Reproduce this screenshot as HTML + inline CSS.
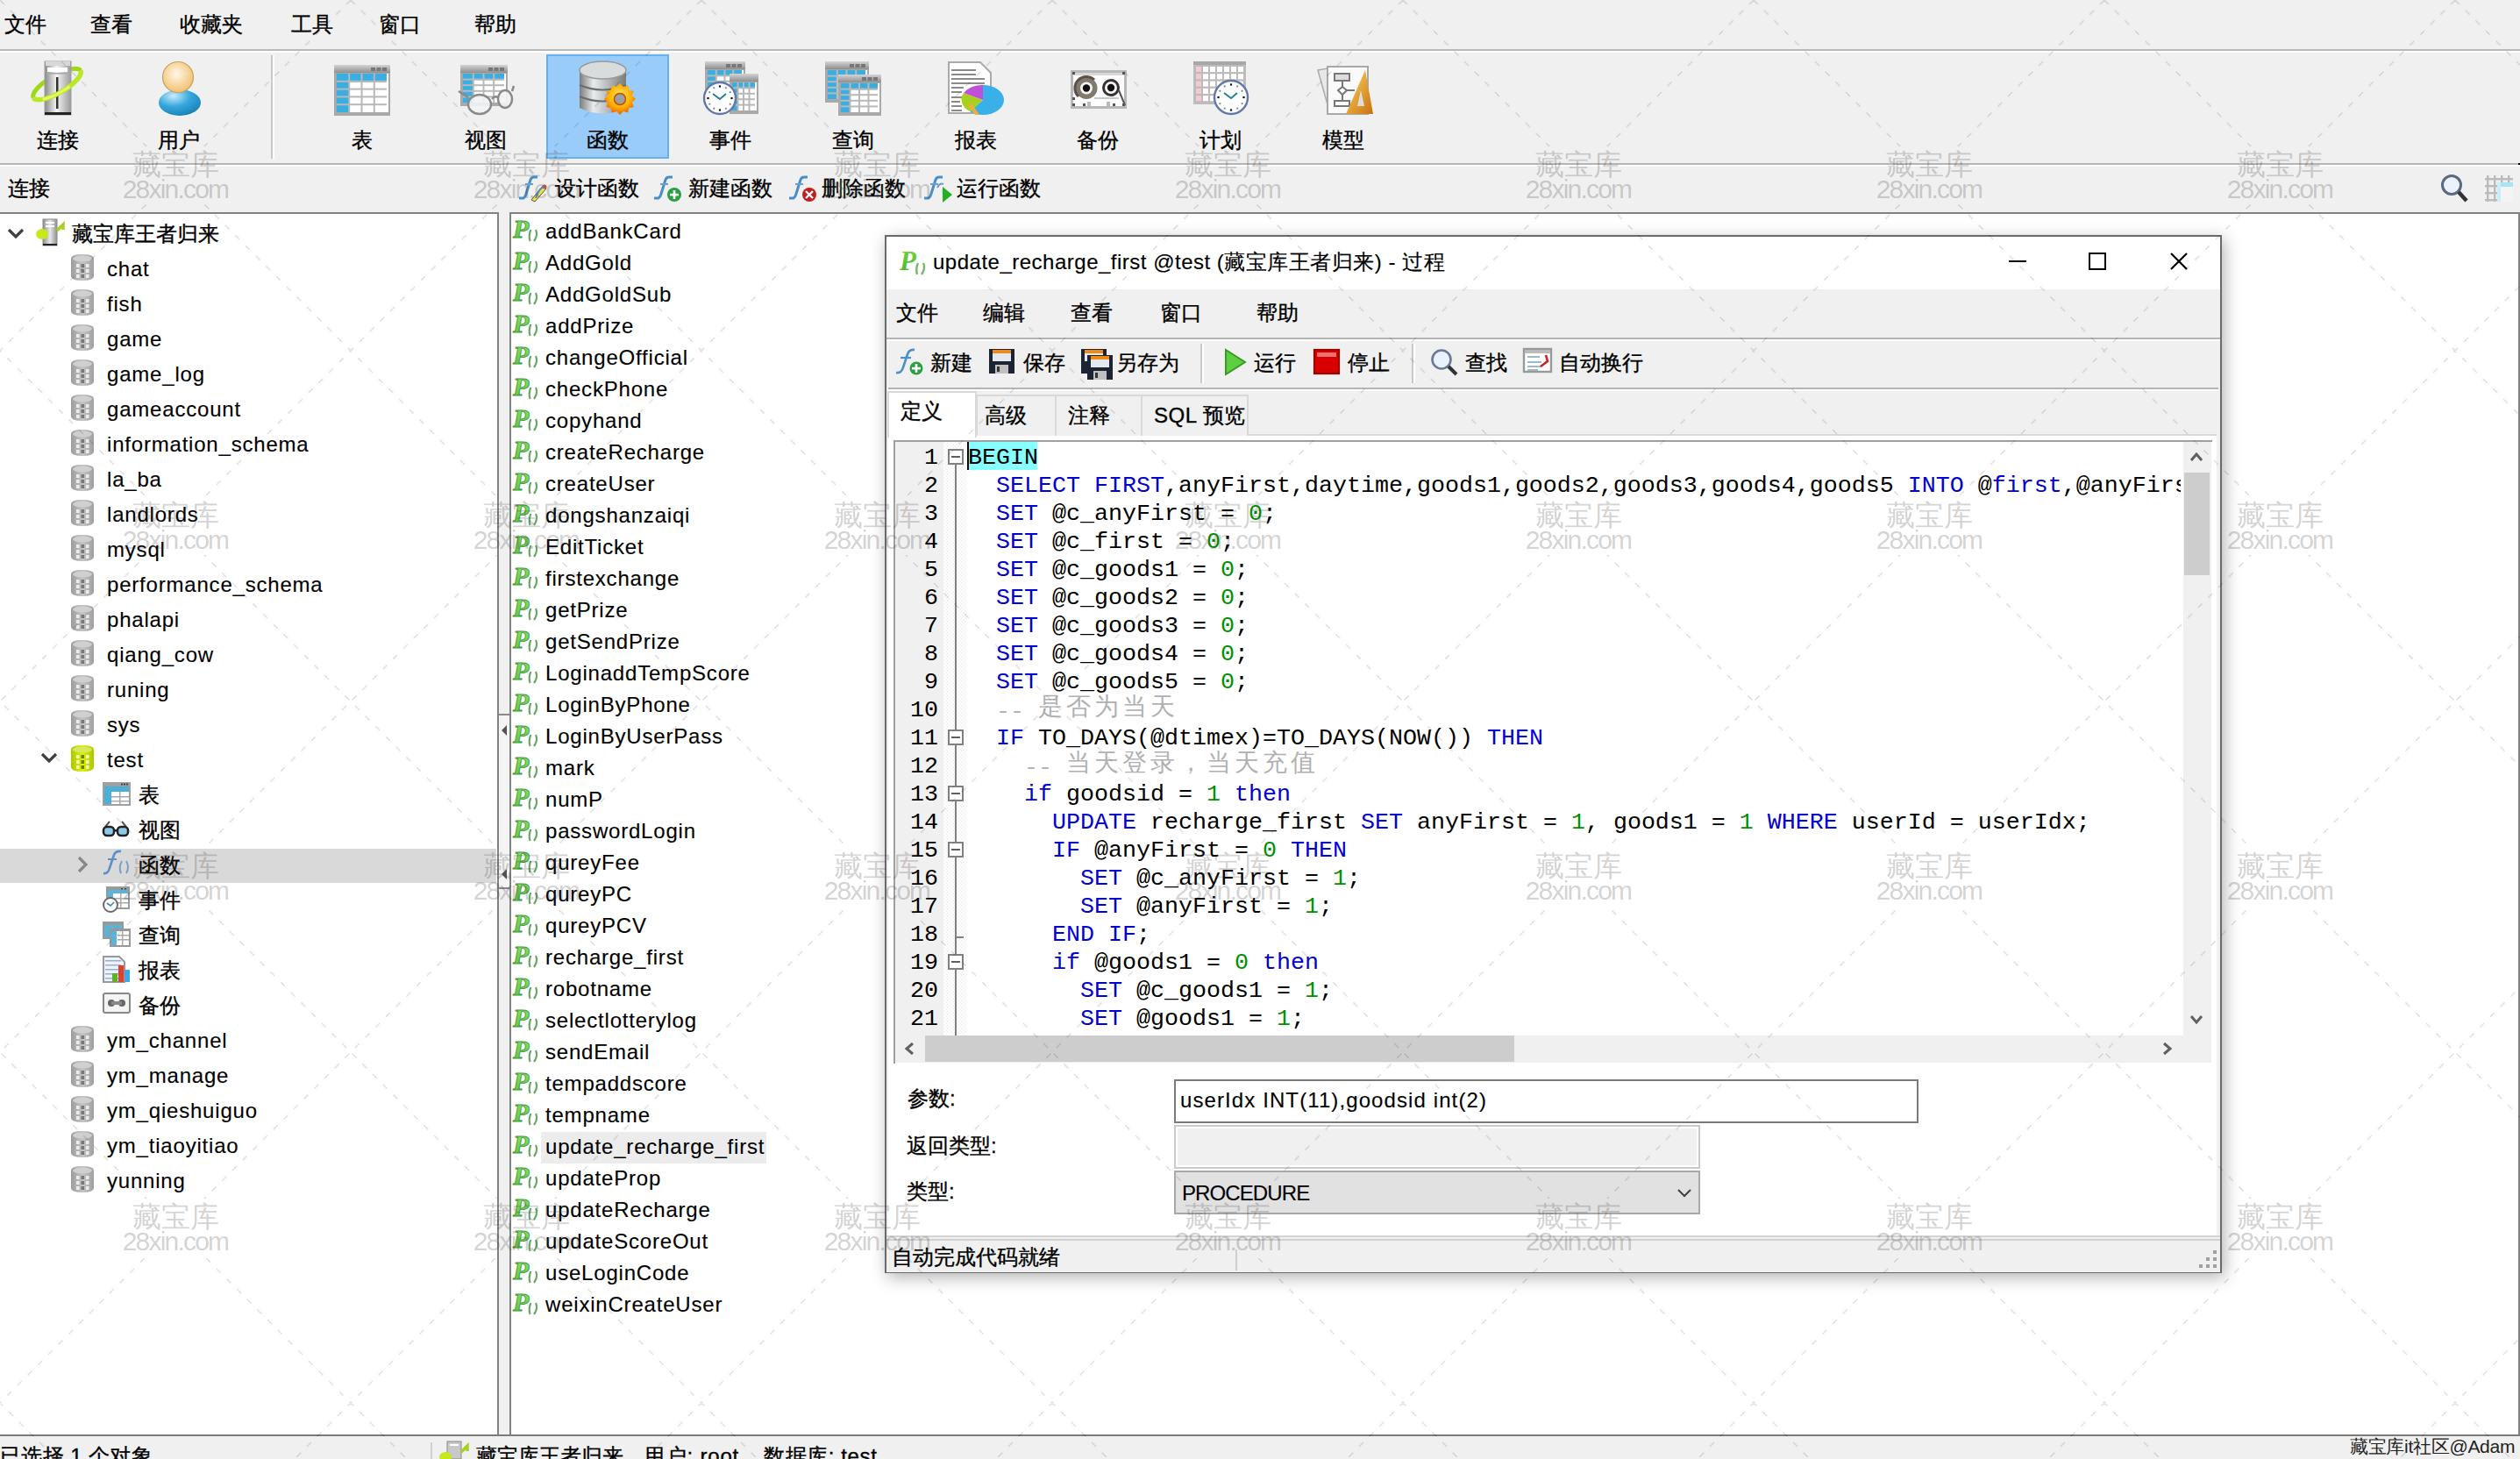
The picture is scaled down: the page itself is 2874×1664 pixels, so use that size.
<!DOCTYPE html>
<html><head><meta charset="utf-8">
<style>
*{margin:0;padding:0;box-sizing:border-box}
html,body{width:2874px;height:1664px;overflow:hidden;background:#f0f0f0;font-family:"Liberation Sans",sans-serif;font-size:24px;color:#000;font-weight:500}
.a{position:absolute}
.t{position:absolute;white-space:nowrap;line-height:24px;font-size:24px;-webkit-text-stroke:0.35px currentColor}
.hl{position:absolute;height:2px}
.vl{position:absolute;width:2px}
.code{position:absolute;font-family:"Liberation Mono",monospace;font-size:26.67px;line-height:32px;white-space:pre;color:#000}
.k{color:#0000d0}.n{color:#009000}.c{color:#b0b0b0}
svg{position:absolute;overflow:visible}
.ls{letter-spacing:0.6px}
</style></head><body>

<div class="t" style="left:5px;top:16px;">文件</div>
<div class="t" style="left:103px;top:16px;">查看</div>
<div class="t" style="left:205px;top:16px;">收藏夹</div>
<div class="t" style="left:332px;top:16px;">工具</div>
<div class="t" style="left:432px;top:16px;">窗口</div>
<div class="t" style="left:541px;top:16px;">帮助</div>
<div class="a" style="left:0px;top:56px;width:2874px;height:2px;background:#b9b9b9"></div>
<div class="a" style="left:0px;top:58px;width:2874px;height:2px;background:#fff"></div>
<div class="a" style="left:623px;top:62px;width:140px;height:119px;background:#99ccf8;border:2px solid #66b0ee"></div>
<div class="a" style="left:309px;top:63px;width:2px;height:118px;background:#c8c8c8"></div>
<div class="a" style="left:311px;top:63px;width:2px;height:118px;background:#fff"></div>
<div class="t" style="left:42px;top:148px;">连接</div>
<div class="t" style="left:180px;top:148px;">用户</div>
<div class="t" style="left:401px;top:148px;">表</div>
<div class="t" style="left:530px;top:148px;">视图</div>
<div class="t" style="left:669px;top:148px;">函数</div>
<div class="t" style="left:809px;top:148px;">事件</div>
<div class="t" style="left:949px;top:148px;">查询</div>
<div class="t" style="left:1089px;top:148px;">报表</div>
<div class="t" style="left:1228px;top:148px;">备份</div>
<div class="t" style="left:1368px;top:148px;">计划</div>
<div class="t" style="left:1508px;top:148px;">模型</div>
<svg style="left:0;top:0" width="1600" height="240">
<defs>
<linearGradient id="gTitle" x1="0" y1="0" x2="0" y2="1"><stop offset="0" stop-color="#d4d4d4"/><stop offset="1" stop-color="#8e8e8e"/></linearGradient>
<linearGradient id="gSrv" x1="0" y1="0" x2="1" y2="0"><stop offset="0" stop-color="#8a8a8a"/><stop offset="0.45" stop-color="#f4f4f4"/><stop offset="1" stop-color="#9a9a9a"/></linearGradient>
<radialGradient id="gHead" cx="0.45" cy="0.4" r="0.6"><stop offset="0" stop-color="#fff8e8"/><stop offset="1" stop-color="#f2c070"/></radialGradient>
<radialGradient id="gBody" cx="0.35" cy="0.25" r="0.8"><stop offset="0" stop-color="#c8ecfa"/><stop offset="0.5" stop-color="#36a8dc"/><stop offset="1" stop-color="#1680b8"/></radialGradient>
<linearGradient id="gMetal" x1="0" y1="0" x2="1" y2="0"><stop offset="0" stop-color="#7c7c7c"/><stop offset="0.3" stop-color="#e8ecec"/><stop offset="0.6" stop-color="#b8bcbc"/><stop offset="1" stop-color="#7a7a7a"/></linearGradient>
<radialGradient id="gGear" cx="0.5" cy="0.4" r="0.6"><stop offset="0" stop-color="#ffe860"/><stop offset="0.6" stop-color="#ffb000"/><stop offset="1" stop-color="#e86000"/></radialGradient>
<linearGradient id="gRuler" x1="0" y1="0" x2="1" y2="1"><stop offset="0" stop-color="#ffd860"/><stop offset="1" stop-color="#c87010"/></linearGradient>
</defs>
<path d="M38.2 111.5 L37.7 110.2 L37.8 108.7 L38.3 107.0 L39.2 105.1 L40.7 103.0 L42.5 100.8 L44.7 98.6 L47.2 96.2 L50.1 93.9 L53.2 91.6 L56.5 89.4 L60.0 87.3 L63.5 85.4 L67.1 83.6 L70.7 82.1 L74.1 80.8 L77.4 79.7 L80.4 78.9 L83.3 78.4 L85.8 78.2 L87.9 78.4 L89.6 78.8 L91.0 79.5 L91.8 80.5" fill="none" stroke="#a0d818" stroke-width="5"/>
<rect x="51" y="70" width="30" height="61" fill="url(#gSrv)" stroke="#a0a0a0" stroke-width="1"/>
<rect x="52" y="70" width="28" height="5" fill="#d8d8d8"/>
<rect x="54" y="77" width="23" height="5" fill="#fff"/><rect x="53" y="83" width="26" height="1.5" fill="#a8a8a8"/>
<rect x="64" y="88" width="2.5" height="36" fill="#333"/>
<rect x="51" y="128" width="30" height="3" fill="#222"/>
<path d="M91.8 80.5 L92.3 81.8 L92.2 83.3 L91.7 85.0 L90.8 86.9 L89.3 89.0 L87.5 91.2 L85.3 93.4 L82.8 95.8 L79.9 98.1 L76.8 100.4 L73.5 102.6 L70.0 104.7 L66.5 106.6 L62.9 108.4 L59.3 109.9 L55.9 111.2 L52.6 112.3 L49.6 113.1 L46.7 113.6 L44.2 113.8 L42.1 113.6 L40.4 113.2 L39.0 112.5 L38.2 111.5" fill="none" stroke="#b8e828" stroke-width="5.5"/>
<path d="M79.4 98.5 L75.8 101.1 L71.9 103.5 L67.9 105.9 L63.8 108.0 L59.7 109.8 L55.8 111.3 L52.0 112.5 L48.6 113.3" fill="none" stroke="#e8f860" stroke-width="3"/>
<ellipse cx="205" cy="117" rx="24" ry="15" fill="url(#gBody)"/>
<circle cx="203" cy="88" r="17.5" fill="url(#gHead)" stroke="#c8a060" stroke-width="1.2"/>
<rect x="381" y="74" width="64" height="58" fill="#a9a9a9"/><rect x="381" y="74" width="64" height="9" fill="url(#gTitle)"/><rect x="423.0" y="77" width="5" height="4" fill="#777"/><rect x="429.5" y="77" width="5" height="4" fill="#777"/><rect x="436.0" y="77" width="5" height="4" fill="#777"/><rect x="384" y="84" width="57" height="44" fill="#fff"/><rect x="384" y="84" width="57" height="9.7" fill="#3aaee0"/><rect x="384" y="84" width="14.2" height="44" fill="#3aaee0"/><rect x="384" y="91.8" width="57" height="2" fill="#b8b8b8"/><rect x="384" y="100.6" width="57" height="2" fill="#b8b8b8"/><rect x="384" y="109.4" width="57" height="2" fill="#b8b8b8"/><rect x="384" y="118.2" width="57" height="2" fill="#b8b8b8"/><rect x="397.2" y="84" width="2" height="44" fill="#b8b8b8"/><rect x="411.5" y="84" width="2" height="44" fill="#b8b8b8"/><rect x="425.8" y="84" width="2" height="44" fill="#b8b8b8"/><rect x="441" y="84" width="2" height="44" fill="#fff"/>
<rect x="525" y="74" width="54" height="47" fill="#a9a9a9"/><rect x="525" y="74" width="54" height="9" fill="url(#gTitle)"/><rect x="557.0" y="77" width="5" height="4" fill="#777"/><rect x="563.5" y="77" width="5" height="4" fill="#777"/><rect x="570.0" y="77" width="5" height="4" fill="#777"/><rect x="528" y="84" width="47" height="33" fill="#fff"/><rect x="528" y="84" width="47" height="7.3" fill="#3aaee0"/><rect x="528" y="84" width="11.8" height="33" fill="#3aaee0"/><rect x="528" y="89.6" width="47" height="2" fill="#b8b8b8"/><rect x="528" y="96.2" width="47" height="2" fill="#b8b8b8"/><rect x="528" y="102.8" width="47" height="2" fill="#b8b8b8"/><rect x="528" y="109.4" width="47" height="2" fill="#b8b8b8"/><rect x="538.8" y="84" width="2" height="33" fill="#b8b8b8"/><rect x="550.5" y="84" width="2" height="33" fill="#b8b8b8"/><rect x="562.2" y="84" width="2" height="33" fill="#b8b8b8"/><rect x="575" y="84" width="2" height="33" fill="#fff"/>
<path d="M523 104 L534 111" stroke="#8a8a8a" stroke-width="2.5"/><path d="M561 113 Q564 109 568 111" fill="none" stroke="#8a8a8a" stroke-width="2.5"/><ellipse cx="547" cy="119" rx="13" ry="11" fill="rgba(240,244,244,0.9)" stroke="#8a8a8a" stroke-width="2.5"/><ellipse cx="576" cy="113" rx="8" ry="10" fill="rgba(240,244,244,0.9)" stroke="#8a8a8a" stroke-width="2.5"/><path d="M584 104 L586 98" stroke="#8a8a8a" stroke-width="2.5"/>
<path d="M661 80 L661 123 Q687 136 714 123 L714 80 Z" fill="url(#gMetal)"/>
<ellipse cx="687.5" cy="80" rx="26.5" ry="10" fill="#d8dcdc" stroke="#9a9a9a" stroke-width="1.5"/>
<path d="M661 97 Q687 108 714 97" fill="none" stroke="#6c6c6c" stroke-width="2"/>
<path d="M661 110 Q687 121 714 110" fill="none" stroke="#6c6c6c" stroke-width="2"/>
<polygon points="725.0,113.0 721.0,116.8 722.6,122.0 717.3,123.3 716.0,128.6 710.8,127.0 707.0,131.0 703.2,127.0 698.0,128.6 696.7,123.3 691.4,122.0 693.0,116.8 689.0,113.0 693.0,109.2 691.4,104.0 696.7,102.7 698.0,97.4 703.2,99.0 707.0,95.0 710.8,99.0 716.0,97.4 717.3,102.7 722.6,104.0 721.0,109.2" fill="url(#gGear)"/>
<circle cx="707" cy="113" r="6.5" fill="#9aa0a4" stroke="#c05000" stroke-width="1.5"/>
<rect x="804" y="70" width="46" height="46" fill="#a9a9a9"/><rect x="804" y="70" width="46" height="9" fill="url(#gTitle)"/><rect x="828.0" y="73" width="5" height="4" fill="#777"/><rect x="834.5" y="73" width="5" height="4" fill="#777"/><rect x="841.0" y="73" width="5" height="4" fill="#777"/><rect x="807" y="80" width="39" height="32" fill="#fff"/><rect x="807" y="80" width="39" height="7.0" fill="#3aaee0"/><rect x="807" y="80" width="9.8" height="32" fill="#3aaee0"/><rect x="807" y="85.4" width="39" height="2" fill="#b8b8b8"/><rect x="807" y="91.8" width="39" height="2" fill="#b8b8b8"/><rect x="807" y="98.2" width="39" height="2" fill="#b8b8b8"/><rect x="807" y="104.6" width="39" height="2" fill="#b8b8b8"/><rect x="815.8" y="80" width="2" height="32" fill="#b8b8b8"/><rect x="825.5" y="80" width="2" height="32" fill="#b8b8b8"/><rect x="835.2" y="80" width="2" height="32" fill="#b8b8b8"/><rect x="846" y="80" width="2" height="32" fill="#fff"/>
<rect x="832" y="84" width="33" height="46" fill="#a9a9a9"/><rect x="832" y="84" width="33" height="9" fill="url(#gTitle)"/><rect x="835" y="94" width="26" height="32" fill="#fff"/><rect x="835" y="94" width="26" height="7.0" fill="#3aaee0"/><rect x="835" y="94" width="6.5" height="32" fill="#3aaee0"/><rect x="835" y="99.4" width="26" height="2" fill="#b8b8b8"/><rect x="835" y="105.8" width="26" height="2" fill="#b8b8b8"/><rect x="835" y="112.2" width="26" height="2" fill="#b8b8b8"/><rect x="835" y="118.6" width="26" height="2" fill="#b8b8b8"/><rect x="840.5" y="94" width="2" height="32" fill="#b8b8b8"/><rect x="847.0" y="94" width="2" height="32" fill="#b8b8b8"/><rect x="853.5" y="94" width="2" height="32" fill="#b8b8b8"/><rect x="861" y="94" width="2" height="32" fill="#fff"/>
<circle cx="821" cy="112" r="18" fill="#fcfdff" stroke="#6478a8" stroke-width="2.4"/><rect x="833.4" y="110.9" width="2.2" height="2.2" fill="#111"/><rect x="831.8" y="117.8" width="1.8" height="1.8" fill="#777"/><rect x="826.9" y="122.8" width="1.8" height="1.8" fill="#777"/><rect x="819.9" y="124.4" width="2.2" height="2.2" fill="#111"/><rect x="813.4" y="122.8" width="1.8" height="1.8" fill="#777"/><rect x="808.4" y="117.8" width="1.8" height="1.8" fill="#777"/><rect x="806.4" y="110.9" width="2.2" height="2.2" fill="#111"/><rect x="808.4" y="104.3" width="1.8" height="1.8" fill="#777"/><rect x="813.4" y="99.4" width="1.8" height="1.8" fill="#777"/><rect x="819.9" y="97.4" width="2.2" height="2.2" fill="#111"/><rect x="826.9" y="99.4" width="1.8" height="1.8" fill="#777"/><rect x="831.8" y="104.3" width="1.8" height="1.8" fill="#777"/><path d="M813 107 L821 113 L828 107" fill="none" stroke="#2a8090" stroke-width="2"/>
<rect x="941" y="70" width="50" height="47" fill="#a9a9a9"/><rect x="941" y="70" width="50" height="9" fill="url(#gTitle)"/><rect x="969.0" y="73" width="5" height="4" fill="#777"/><rect x="975.5" y="73" width="5" height="4" fill="#777"/><rect x="982.0" y="73" width="5" height="4" fill="#777"/><rect x="944" y="80" width="43" height="33" fill="#fff"/><rect x="944" y="80" width="43" height="7.3" fill="#3aaee0"/><rect x="944" y="80" width="10.8" height="33" fill="#3aaee0"/><rect x="944" y="85.6" width="43" height="2" fill="#b8b8b8"/><rect x="944" y="92.2" width="43" height="2" fill="#b8b8b8"/><rect x="944" y="98.8" width="43" height="2" fill="#b8b8b8"/><rect x="944" y="105.4" width="43" height="2" fill="#b8b8b8"/><rect x="953.8" y="80" width="2" height="33" fill="#b8b8b8"/><rect x="964.5" y="80" width="2" height="33" fill="#b8b8b8"/><rect x="975.2" y="80" width="2" height="33" fill="#b8b8b8"/><rect x="987" y="80" width="2" height="33" fill="#fff"/>
<rect x="956" y="85" width="49" height="47" fill="#a9a9a9"/><rect x="956" y="85" width="49" height="9" fill="url(#gTitle)"/><rect x="983.0" y="88" width="5" height="4" fill="#777"/><rect x="989.5" y="88" width="5" height="4" fill="#777"/><rect x="996.0" y="88" width="5" height="4" fill="#777"/><rect x="959" y="95" width="42" height="33" fill="#fff"/><rect x="959" y="95" width="42" height="7.3" fill="#3aaee0"/><rect x="959" y="95" width="10.5" height="33" fill="#3aaee0"/><rect x="959" y="100.6" width="42" height="2" fill="#b8b8b8"/><rect x="959" y="107.2" width="42" height="2" fill="#b8b8b8"/><rect x="959" y="113.8" width="42" height="2" fill="#b8b8b8"/><rect x="959" y="120.4" width="42" height="2" fill="#b8b8b8"/><rect x="968.5" y="95" width="2" height="33" fill="#b8b8b8"/><rect x="979.0" y="95" width="2" height="33" fill="#b8b8b8"/><rect x="989.5" y="95" width="2" height="33" fill="#b8b8b8"/><rect x="1001" y="95" width="2" height="33" fill="#fff"/>
<path d="M1082 71 L1118 71 L1130 83 L1130 129 L1082 129 Z" fill="#fff" stroke="#aaa" stroke-width="2"/>
<rect x="1085" y="79" width="28" height="2" fill="#8a8a8a"/>
<rect x="1085" y="84" width="28" height="2" fill="#8a8a8a"/>
<rect x="1085" y="89" width="38" height="2" fill="#8a8a8a"/>
<rect x="1085" y="94" width="38" height="2" fill="#8a8a8a"/>
<rect x="1085" y="99" width="14" height="2" fill="#8a8a8a"/>
<rect x="1085" y="104" width="12" height="2" fill="#8a8a8a"/>
<rect x="1085" y="110" width="12" height="2" fill="#8a8a8a"/>
<rect x="1085" y="115" width="10" height="2" fill="#8a8a8a"/>
<rect x="1085" y="120" width="12" height="2" fill="#8a8a8a"/>
<rect x="1085" y="125" width="12" height="2" fill="#8a8a8a"/>
<path d="M1121 114 L1121 97 A24 17 0 0 1 1121 131 A24 17 0 0 1 1106 127 Z" fill="#3ab0e8"/>
<path d="M1121 114 L1106 127 A24 17 0 0 1 1099 106 Z" fill="#a8d020"/>
<path d="M1121 114 L1099 106 A24 17 0 0 1 1121 97 Z" fill="#c050d8"/>
<path d="M1108 118 L1117 131 L1112 131 L1104 120 Z" fill="#f0b030"/>
<rect x="1222.5" y="81.5" width="61" height="41" fill="#fcfcfc" stroke="#b8b8b8" stroke-width="3"/>
<rect x="1224" y="83" width="58" height="3" fill="#d8d8d8"/>
<rect x="1223" y="82" width="3" height="3" fill="#555"/>
<rect x="1280" y="82" width="3" height="3" fill="#555"/>
<rect x="1223" y="111" width="3" height="3" fill="#555"/>
<rect x="1223" y="118" width="3" height="3" fill="#555"/>
<rect x="1280" y="118" width="3" height="3" fill="#555"/>
<rect x="1235" y="118" width="3" height="3" fill="#555"/>
<rect x="1269" y="118" width="3" height="3" fill="#555"/>
<circle cx="1239" cy="100.5" r="12.5" fill="#827a6c"/><path d="M1230 110 A12.5 12.5 0 0 1 1248 91" fill="none" stroke="#5a5248" stroke-width="3"/>
<circle cx="1239" cy="100.5" r="7" fill="#f4f4f4"/><circle cx="1239" cy="100.5" r="4.2" fill="#111"/>
<circle cx="1267" cy="100" r="8.5" fill="#f4f4f4" stroke="#3a3232" stroke-width="3"/><circle cx="1267" cy="100" r="4.2" fill="#111"/>
<path d="M1276 103 L1283 120" stroke="#555" stroke-width="2"/>
<path d="M1248 112 L1276 112" stroke="#c8c8d0" stroke-width="2"/><rect x="1240" y="116" width="4" height="5" fill="#bbb"/><rect x="1262" y="116" width="4" height="5" fill="#bbb"/>
<rect x="1361" y="70" width="60" height="49" fill="#bcbcbc"/>
<rect x="1361" y="70" width="60" height="4" fill="#a8a8a8"/>
<rect x="1364" y="76.0" width="6" height="6" fill="#f8c8d0"/>
<rect x="1372" y="76.0" width="6" height="6" fill="#fff"/>
<rect x="1380" y="76.0" width="6" height="6" fill="#fff"/>
<rect x="1388" y="76.0" width="6" height="6" fill="#fff"/>
<rect x="1396" y="76.0" width="6" height="6" fill="#fff"/>
<rect x="1404" y="76.0" width="6" height="6" fill="#fff"/>
<rect x="1412" y="76.0" width="6" height="6" fill="#fff"/>
<rect x="1364" y="84.3" width="6" height="6" fill="#f8c8d0"/>
<rect x="1372" y="84.3" width="6" height="6" fill="#fff"/>
<rect x="1380" y="84.3" width="6" height="6" fill="#fff"/>
<rect x="1388" y="84.3" width="6" height="6" fill="#fff"/>
<rect x="1396" y="84.3" width="6" height="6" fill="#fff"/>
<rect x="1404" y="84.3" width="6" height="6" fill="#fff"/>
<rect x="1412" y="84.3" width="6" height="6" fill="#fff"/>
<rect x="1364" y="92.6" width="6" height="6" fill="#f8c8d0"/>
<rect x="1372" y="92.6" width="6" height="6" fill="#fff"/>
<rect x="1380" y="92.6" width="6" height="6" fill="#fff"/>
<rect x="1388" y="92.6" width="6" height="6" fill="#fff"/>
<rect x="1396" y="92.6" width="6" height="6" fill="#fff"/>
<rect x="1404" y="92.6" width="6" height="6" fill="#fff"/>
<rect x="1412" y="92.6" width="6" height="6" fill="#fff"/>
<rect x="1364" y="100.9" width="6" height="6" fill="#f8c8d0"/>
<rect x="1372" y="100.9" width="6" height="6" fill="#fff"/>
<rect x="1380" y="100.9" width="6" height="6" fill="#fff"/>
<rect x="1388" y="100.9" width="6" height="6" fill="#fff"/>
<rect x="1396" y="100.9" width="6" height="6" fill="#fff"/>
<rect x="1404" y="100.9" width="6" height="6" fill="#fff"/>
<rect x="1412" y="100.9" width="6" height="6" fill="#fff"/>
<rect x="1364" y="109.2" width="6" height="6" fill="#f8c8d0"/>
<rect x="1372" y="109.2" width="6" height="6" fill="#fff"/>
<rect x="1380" y="109.2" width="6" height="6" fill="#fff"/>
<rect x="1388" y="109.2" width="6" height="6" fill="#fff"/>
<rect x="1396" y="109.2" width="6" height="6" fill="#fff"/>
<rect x="1404" y="109.2" width="6" height="6" fill="#fff"/>
<rect x="1412" y="109.2" width="6" height="6" fill="#fff"/>
<circle cx="1404" cy="111" r="19" fill="#fcfdff" stroke="#6478a8" stroke-width="2.4"/><rect x="1417.4" y="109.9" width="2.2" height="2.2" fill="#111"/><rect x="1415.7" y="117.3" width="1.8" height="1.8" fill="#777"/><rect x="1410.3" y="122.7" width="1.8" height="1.8" fill="#777"/><rect x="1402.9" y="124.4" width="2.2" height="2.2" fill="#111"/><rect x="1395.8" y="122.7" width="1.8" height="1.8" fill="#777"/><rect x="1390.5" y="117.3" width="1.8" height="1.8" fill="#777"/><rect x="1388.4" y="109.9" width="2.2" height="2.2" fill="#111"/><rect x="1390.5" y="102.8" width="1.8" height="1.8" fill="#777"/><rect x="1395.8" y="97.5" width="1.8" height="1.8" fill="#777"/><rect x="1402.9" y="95.4" width="2.2" height="2.2" fill="#111"/><rect x="1410.3" y="97.5" width="1.8" height="1.8" fill="#777"/><rect x="1415.7" y="102.8" width="1.8" height="1.8" fill="#777"/><path d="M1396 106 L1404 112 L1411 106" fill="none" stroke="#2a8090" stroke-width="2"/>
<path d="M1503 80 L1514 78 L1530 128 L1517 130 Z" fill="#e8e8e8" stroke="#aaa" stroke-width="1.5"/>
<rect x="1514" y="76" width="46" height="54" fill="#fafafa" stroke="#a8a8a8" stroke-width="2"/>
<rect x="1522" y="84" width="17" height="8" fill="#ddd" stroke="#777" stroke-width="2"/>
<rect x="1530" y="92" width="2" height="8" fill="#777"/>
<path d="M1531 99 L1536 103 L1531 108 L1526 103 Z" fill="#fff" stroke="#777" stroke-width="2"/>
<rect x="1530" y="108" width="2" height="7" fill="#777"/>
<rect x="1522" y="115" width="17" height="6" fill="#fff" stroke="#777" stroke-width="2"/>
<path d="M1536 103 L1545 103" stroke="#777" stroke-width="2"/>
<path d="M1557 80 L1566 130 L1535 130 Z" fill="url(#gRuler)"/>
<path d="M1552 103 L1556 121 L1548 121 Z" fill="#ddd"/>
<path d="M592 226 L597 226 Q599 225 600 221 L605 205 Q606 202 609 202 L613 202" fill="none" stroke="#4a8ec8" stroke-width="3"/><path d="M599 210 L608 210" stroke="#6aa0d0" stroke-width="2"/>
<path d="M606 228 L619 212 L623 215 L610 230 Z" fill="#f0e040" stroke="#555" stroke-width="1"/><circle cx="621" cy="213" r="2.5" fill="#e05050"/>
<path d="M611 226 Q616 212 621 214" fill="none" stroke="#5a8ac8" stroke-width="2"/>
<path d="M746 226 L751 226 Q753 225 754 221 L759 205 Q760 202 763 202 L767 202" fill="none" stroke="#4a8ec8" stroke-width="3"/><path d="M753 210 L762 210" stroke="#6aa0d0" stroke-width="2"/>
<circle cx="769" cy="222" r="8" fill="#2aa040"/><rect x="764" y="220.8" width="10" height="2.6" fill="#fff"/><rect x="767.7" y="217" width="2.6" height="10" fill="#fff"/>
<path d="M900 226 L905 226 Q907 225 908 221 L913 205 Q914 202 917 202 L921 202" fill="none" stroke="#4a8ec8" stroke-width="3"/><path d="M907 210 L916 210" stroke="#6aa0d0" stroke-width="2"/>
<circle cx="923" cy="222" r="8" fill="#c02020"/><path d="M919 218L927 226M927 218L919 226" stroke="#fff" stroke-width="2.4"/>
<path d="M1054 226 L1059 226 Q1061 225 1062 221 L1067 205 Q1068 202 1071 202 L1075 202" fill="none" stroke="#4a8ec8" stroke-width="3"/><path d="M1061 210 L1070 210" stroke="#6aa0d0" stroke-width="2"/>
<path d="M1069 214 Q1072 208 1076 210" fill="none" stroke="#6a9ad0" stroke-width="2"/>
<path d="M1075 213 L1086 222 L1075 231 Z" fill="#22b020"/>
</svg>
<svg style="left:2780px;top:196px" width="94" height="40">
<circle cx="16" cy="15" r="10.5" fill="#eaf2ff" stroke="#5a6a80" stroke-width="3"/>
<path d="M24 23 L33 33" stroke="#333" stroke-width="4.5"/>
<rect x="56" y="4" width="2.4" height="30" fill="#bbb"/>
<rect x="64" y="4" width="2.4" height="30" fill="#bbb"/>
<rect x="72" y="4" width="2.4" height="30" fill="#bbb"/>
<rect x="80" y="4" width="2.4" height="30" fill="#bbb"/>
<rect x="54" y="7" width="32" height="2.4" fill="#bbb"/>
<rect x="54" y="15" width="32" height="2.4" fill="#bbb"/>
<rect x="54" y="23" width="32" height="2.4" fill="#bbb"/>
<rect x="54" y="31" width="32" height="2.4" fill="#bbb"/>
<rect x="78" y="13" width="9" height="21" fill="#f0f0f0"/><rect x="68" y="13" width="18" height="21" fill="#f4f4f4"/>
<rect x="68" y="12" width="18" height="5" fill="#a8e4f4"/><rect x="68" y="12" width="4" height="22" fill="#c8eef8"/>
</svg>
<div class="a" style="left:0px;top:186px;width:2874px;height:2px;background:#b4b4b4"></div>
<div class="a" style="left:0px;top:188px;width:2874px;height:2px;background:#fff"></div>
<div class="t" style="left:9px;top:203px;">连接</div>
<div class="t" style="left:633px;top:203px;">设计函数</div>
<div class="t" style="left:785px;top:203px;">新建函数</div>
<div class="t" style="left:937px;top:203px;">删除函数</div>
<div class="t" style="left:1091px;top:203px;">运行函数</div>
<div class="a" style="left:0px;top:242px;width:569px;height:1395px;background:#fff;border-top:2px solid #828282;border-right:2px solid #828282"></div>
<div class="a" style="left:581px;top:242px;width:2293px;height:1395px;background:#fff;border-top:2px solid #828282;border-left:2px solid #828282"></div>
<div class="a" style="left:0px;top:968px;width:566px;height:39px;background:#d9d9d9"></div>
<!--TREE-->
<div class="t" style="left:82px;top:255px;">藏宝库王者归来</div>
<div class="t" style="left:122px;top:295px;letter-spacing:0.8px;-webkit-text-stroke:0.12px #000">chat</div>
<div class="t" style="left:122px;top:335px;letter-spacing:0.8px;-webkit-text-stroke:0.12px #000">fish</div>
<div class="t" style="left:122px;top:375px;letter-spacing:0.8px;-webkit-text-stroke:0.12px #000">game</div>
<div class="t" style="left:122px;top:415px;letter-spacing:0.8px;-webkit-text-stroke:0.12px #000">game_log</div>
<div class="t" style="left:122px;top:455px;letter-spacing:0.8px;-webkit-text-stroke:0.12px #000">gameaccount</div>
<div class="t" style="left:122px;top:495px;letter-spacing:0.8px;-webkit-text-stroke:0.12px #000">information_schema</div>
<div class="t" style="left:122px;top:535px;letter-spacing:0.8px;-webkit-text-stroke:0.12px #000">la_ba</div>
<div class="t" style="left:122px;top:575px;letter-spacing:0.8px;-webkit-text-stroke:0.12px #000">landlords</div>
<div class="t" style="left:122px;top:615px;letter-spacing:0.8px;-webkit-text-stroke:0.12px #000">mysql</div>
<div class="t" style="left:122px;top:655px;letter-spacing:0.8px;-webkit-text-stroke:0.12px #000">performance_schema</div>
<div class="t" style="left:122px;top:695px;letter-spacing:0.8px;-webkit-text-stroke:0.12px #000">phalapi</div>
<div class="t" style="left:122px;top:735px;letter-spacing:0.8px;-webkit-text-stroke:0.12px #000">qiang_cow</div>
<div class="t" style="left:122px;top:775px;letter-spacing:0.8px;-webkit-text-stroke:0.12px #000">runing</div>
<div class="t" style="left:122px;top:815px;letter-spacing:0.8px;-webkit-text-stroke:0.12px #000">sys</div>
<div class="t" style="left:122px;top:855px;letter-spacing:0.8px;-webkit-text-stroke:0.12px #000">test</div>
<div class="t" style="left:158px;top:895px;">表</div>
<div class="t" style="left:158px;top:935px;">视图</div>
<div class="t" style="left:158px;top:975px;">函数</div>
<div class="t" style="left:158px;top:1015px;">事件</div>
<div class="t" style="left:158px;top:1055px;">查询</div>
<div class="t" style="left:158px;top:1095px;">报表</div>
<div class="t" style="left:158px;top:1135px;">备份</div>
<div class="t" style="left:122px;top:1175px;letter-spacing:0.8px;-webkit-text-stroke:0.12px #000">ym_channel</div>
<div class="t" style="left:122px;top:1215px;letter-spacing:0.8px;-webkit-text-stroke:0.12px #000">ym_manage</div>
<div class="t" style="left:122px;top:1255px;letter-spacing:0.8px;-webkit-text-stroke:0.12px #000">ym_qieshuiguo</div>
<div class="t" style="left:122px;top:1295px;letter-spacing:0.8px;-webkit-text-stroke:0.12px #000">ym_tiaoyitiao</div>
<div class="t" style="left:122px;top:1335px;letter-spacing:0.8px;-webkit-text-stroke:0.12px #000">yunning</div>
<svg style="left:0;top:240px" width="570" height="960" viewBox="0 240 570 960">
<defs>
<linearGradient id="gDb" x1="0" y1="0" x2="1" y2="0"><stop offset="0" stop-color="#9c9c9c"/><stop offset="0.5" stop-color="#c4c4c4"/><stop offset="1" stop-color="#a0a0a0"/></linearGradient>
<linearGradient id="gDbY" x1="0" y1="0" x2="1" y2="0"><stop offset="0" stop-color="#a8c800"/><stop offset="0.5" stop-color="#e0f000"/><stop offset="1" stop-color="#a8c800"/></linearGradient>
<linearGradient id="gSrv2" x1="0" y1="0" x2="1" y2="0"><stop offset="0" stop-color="#909090"/><stop offset="0.5" stop-color="#e8e8e8"/><stop offset="1" stop-color="#909090"/></linearGradient>
</defs>
<path d="M10 262 L18 270 L26 262" fill="none" stroke="#404040" stroke-width="3.2"/>
<rect x="49" y="250" width="16" height="30" fill="url(#gSrv2)" stroke="#888" stroke-width="1"/>
<rect x="52" y="253" width="10" height="2" fill="#fff"/><rect x="52" y="257" width="10" height="2" fill="#fff"/><rect x="49" y="278" width="16" height="2" fill="#222"/>
<ellipse cx="48" cy="267" rx="7" ry="6" fill="#c8e818"/>
<path d="M65 263 L72 256 L72 262" fill="none" stroke="#a8d020" stroke-width="3.5"/>
<path d="M81 295 Q81 290 94 290 Q107 290 107 295 L107 315 Q107 320 94 320 Q81 320 81 315 Z" fill="url(#gDb)"/><ellipse cx="94" cy="295" rx="11" ry="3.5" fill="#cfcfcf"/><rect x="87.0" y="301" width="3.5" height="4" fill="#ececec"/><rect x="92.5" y="301" width="3.5" height="4" fill="#777"/><rect x="98.0" y="301" width="3.5" height="4" fill="#ececec"/><rect x="87.0" y="307" width="3.5" height="4" fill="#ececec"/><rect x="92.5" y="307" width="3.5" height="4" fill="#777"/><rect x="98.0" y="307" width="3.5" height="4" fill="#ececec"/><rect x="87.0" y="313" width="3.5" height="4" fill="#ececec"/><rect x="92.5" y="313" width="3.5" height="4" fill="#777"/><rect x="98.0" y="313" width="3.5" height="4" fill="#ececec"/>
<path d="M81 335 Q81 330 94 330 Q107 330 107 335 L107 355 Q107 360 94 360 Q81 360 81 355 Z" fill="url(#gDb)"/><ellipse cx="94" cy="335" rx="11" ry="3.5" fill="#cfcfcf"/><rect x="87.0" y="341" width="3.5" height="4" fill="#ececec"/><rect x="92.5" y="341" width="3.5" height="4" fill="#777"/><rect x="98.0" y="341" width="3.5" height="4" fill="#ececec"/><rect x="87.0" y="347" width="3.5" height="4" fill="#ececec"/><rect x="92.5" y="347" width="3.5" height="4" fill="#777"/><rect x="98.0" y="347" width="3.5" height="4" fill="#ececec"/><rect x="87.0" y="353" width="3.5" height="4" fill="#ececec"/><rect x="92.5" y="353" width="3.5" height="4" fill="#777"/><rect x="98.0" y="353" width="3.5" height="4" fill="#ececec"/>
<path d="M81 375 Q81 370 94 370 Q107 370 107 375 L107 395 Q107 400 94 400 Q81 400 81 395 Z" fill="url(#gDb)"/><ellipse cx="94" cy="375" rx="11" ry="3.5" fill="#cfcfcf"/><rect x="87.0" y="381" width="3.5" height="4" fill="#ececec"/><rect x="92.5" y="381" width="3.5" height="4" fill="#777"/><rect x="98.0" y="381" width="3.5" height="4" fill="#ececec"/><rect x="87.0" y="387" width="3.5" height="4" fill="#ececec"/><rect x="92.5" y="387" width="3.5" height="4" fill="#777"/><rect x="98.0" y="387" width="3.5" height="4" fill="#ececec"/><rect x="87.0" y="393" width="3.5" height="4" fill="#ececec"/><rect x="92.5" y="393" width="3.5" height="4" fill="#777"/><rect x="98.0" y="393" width="3.5" height="4" fill="#ececec"/>
<path d="M81 415 Q81 410 94 410 Q107 410 107 415 L107 435 Q107 440 94 440 Q81 440 81 435 Z" fill="url(#gDb)"/><ellipse cx="94" cy="415" rx="11" ry="3.5" fill="#cfcfcf"/><rect x="87.0" y="421" width="3.5" height="4" fill="#ececec"/><rect x="92.5" y="421" width="3.5" height="4" fill="#777"/><rect x="98.0" y="421" width="3.5" height="4" fill="#ececec"/><rect x="87.0" y="427" width="3.5" height="4" fill="#ececec"/><rect x="92.5" y="427" width="3.5" height="4" fill="#777"/><rect x="98.0" y="427" width="3.5" height="4" fill="#ececec"/><rect x="87.0" y="433" width="3.5" height="4" fill="#ececec"/><rect x="92.5" y="433" width="3.5" height="4" fill="#777"/><rect x="98.0" y="433" width="3.5" height="4" fill="#ececec"/>
<path d="M81 455 Q81 450 94 450 Q107 450 107 455 L107 475 Q107 480 94 480 Q81 480 81 475 Z" fill="url(#gDb)"/><ellipse cx="94" cy="455" rx="11" ry="3.5" fill="#cfcfcf"/><rect x="87.0" y="461" width="3.5" height="4" fill="#ececec"/><rect x="92.5" y="461" width="3.5" height="4" fill="#777"/><rect x="98.0" y="461" width="3.5" height="4" fill="#ececec"/><rect x="87.0" y="467" width="3.5" height="4" fill="#ececec"/><rect x="92.5" y="467" width="3.5" height="4" fill="#777"/><rect x="98.0" y="467" width="3.5" height="4" fill="#ececec"/><rect x="87.0" y="473" width="3.5" height="4" fill="#ececec"/><rect x="92.5" y="473" width="3.5" height="4" fill="#777"/><rect x="98.0" y="473" width="3.5" height="4" fill="#ececec"/>
<path d="M81 495 Q81 490 94 490 Q107 490 107 495 L107 515 Q107 520 94 520 Q81 520 81 515 Z" fill="url(#gDb)"/><ellipse cx="94" cy="495" rx="11" ry="3.5" fill="#cfcfcf"/><rect x="87.0" y="501" width="3.5" height="4" fill="#ececec"/><rect x="92.5" y="501" width="3.5" height="4" fill="#777"/><rect x="98.0" y="501" width="3.5" height="4" fill="#ececec"/><rect x="87.0" y="507" width="3.5" height="4" fill="#ececec"/><rect x="92.5" y="507" width="3.5" height="4" fill="#777"/><rect x="98.0" y="507" width="3.5" height="4" fill="#ececec"/><rect x="87.0" y="513" width="3.5" height="4" fill="#ececec"/><rect x="92.5" y="513" width="3.5" height="4" fill="#777"/><rect x="98.0" y="513" width="3.5" height="4" fill="#ececec"/>
<path d="M81 535 Q81 530 94 530 Q107 530 107 535 L107 555 Q107 560 94 560 Q81 560 81 555 Z" fill="url(#gDb)"/><ellipse cx="94" cy="535" rx="11" ry="3.5" fill="#cfcfcf"/><rect x="87.0" y="541" width="3.5" height="4" fill="#ececec"/><rect x="92.5" y="541" width="3.5" height="4" fill="#777"/><rect x="98.0" y="541" width="3.5" height="4" fill="#ececec"/><rect x="87.0" y="547" width="3.5" height="4" fill="#ececec"/><rect x="92.5" y="547" width="3.5" height="4" fill="#777"/><rect x="98.0" y="547" width="3.5" height="4" fill="#ececec"/><rect x="87.0" y="553" width="3.5" height="4" fill="#ececec"/><rect x="92.5" y="553" width="3.5" height="4" fill="#777"/><rect x="98.0" y="553" width="3.5" height="4" fill="#ececec"/>
<path d="M81 575 Q81 570 94 570 Q107 570 107 575 L107 595 Q107 600 94 600 Q81 600 81 595 Z" fill="url(#gDb)"/><ellipse cx="94" cy="575" rx="11" ry="3.5" fill="#cfcfcf"/><rect x="87.0" y="581" width="3.5" height="4" fill="#ececec"/><rect x="92.5" y="581" width="3.5" height="4" fill="#777"/><rect x="98.0" y="581" width="3.5" height="4" fill="#ececec"/><rect x="87.0" y="587" width="3.5" height="4" fill="#ececec"/><rect x="92.5" y="587" width="3.5" height="4" fill="#777"/><rect x="98.0" y="587" width="3.5" height="4" fill="#ececec"/><rect x="87.0" y="593" width="3.5" height="4" fill="#ececec"/><rect x="92.5" y="593" width="3.5" height="4" fill="#777"/><rect x="98.0" y="593" width="3.5" height="4" fill="#ececec"/>
<path d="M81 615 Q81 610 94 610 Q107 610 107 615 L107 635 Q107 640 94 640 Q81 640 81 635 Z" fill="url(#gDb)"/><ellipse cx="94" cy="615" rx="11" ry="3.5" fill="#cfcfcf"/><rect x="87.0" y="621" width="3.5" height="4" fill="#ececec"/><rect x="92.5" y="621" width="3.5" height="4" fill="#777"/><rect x="98.0" y="621" width="3.5" height="4" fill="#ececec"/><rect x="87.0" y="627" width="3.5" height="4" fill="#ececec"/><rect x="92.5" y="627" width="3.5" height="4" fill="#777"/><rect x="98.0" y="627" width="3.5" height="4" fill="#ececec"/><rect x="87.0" y="633" width="3.5" height="4" fill="#ececec"/><rect x="92.5" y="633" width="3.5" height="4" fill="#777"/><rect x="98.0" y="633" width="3.5" height="4" fill="#ececec"/>
<path d="M81 655 Q81 650 94 650 Q107 650 107 655 L107 675 Q107 680 94 680 Q81 680 81 675 Z" fill="url(#gDb)"/><ellipse cx="94" cy="655" rx="11" ry="3.5" fill="#cfcfcf"/><rect x="87.0" y="661" width="3.5" height="4" fill="#ececec"/><rect x="92.5" y="661" width="3.5" height="4" fill="#777"/><rect x="98.0" y="661" width="3.5" height="4" fill="#ececec"/><rect x="87.0" y="667" width="3.5" height="4" fill="#ececec"/><rect x="92.5" y="667" width="3.5" height="4" fill="#777"/><rect x="98.0" y="667" width="3.5" height="4" fill="#ececec"/><rect x="87.0" y="673" width="3.5" height="4" fill="#ececec"/><rect x="92.5" y="673" width="3.5" height="4" fill="#777"/><rect x="98.0" y="673" width="3.5" height="4" fill="#ececec"/>
<path d="M81 695 Q81 690 94 690 Q107 690 107 695 L107 715 Q107 720 94 720 Q81 720 81 715 Z" fill="url(#gDb)"/><ellipse cx="94" cy="695" rx="11" ry="3.5" fill="#cfcfcf"/><rect x="87.0" y="701" width="3.5" height="4" fill="#ececec"/><rect x="92.5" y="701" width="3.5" height="4" fill="#777"/><rect x="98.0" y="701" width="3.5" height="4" fill="#ececec"/><rect x="87.0" y="707" width="3.5" height="4" fill="#ececec"/><rect x="92.5" y="707" width="3.5" height="4" fill="#777"/><rect x="98.0" y="707" width="3.5" height="4" fill="#ececec"/><rect x="87.0" y="713" width="3.5" height="4" fill="#ececec"/><rect x="92.5" y="713" width="3.5" height="4" fill="#777"/><rect x="98.0" y="713" width="3.5" height="4" fill="#ececec"/>
<path d="M81 735 Q81 730 94 730 Q107 730 107 735 L107 755 Q107 760 94 760 Q81 760 81 755 Z" fill="url(#gDb)"/><ellipse cx="94" cy="735" rx="11" ry="3.5" fill="#cfcfcf"/><rect x="87.0" y="741" width="3.5" height="4" fill="#ececec"/><rect x="92.5" y="741" width="3.5" height="4" fill="#777"/><rect x="98.0" y="741" width="3.5" height="4" fill="#ececec"/><rect x="87.0" y="747" width="3.5" height="4" fill="#ececec"/><rect x="92.5" y="747" width="3.5" height="4" fill="#777"/><rect x="98.0" y="747" width="3.5" height="4" fill="#ececec"/><rect x="87.0" y="753" width="3.5" height="4" fill="#ececec"/><rect x="92.5" y="753" width="3.5" height="4" fill="#777"/><rect x="98.0" y="753" width="3.5" height="4" fill="#ececec"/>
<path d="M81 775 Q81 770 94 770 Q107 770 107 775 L107 795 Q107 800 94 800 Q81 800 81 795 Z" fill="url(#gDb)"/><ellipse cx="94" cy="775" rx="11" ry="3.5" fill="#cfcfcf"/><rect x="87.0" y="781" width="3.5" height="4" fill="#ececec"/><rect x="92.5" y="781" width="3.5" height="4" fill="#777"/><rect x="98.0" y="781" width="3.5" height="4" fill="#ececec"/><rect x="87.0" y="787" width="3.5" height="4" fill="#ececec"/><rect x="92.5" y="787" width="3.5" height="4" fill="#777"/><rect x="98.0" y="787" width="3.5" height="4" fill="#ececec"/><rect x="87.0" y="793" width="3.5" height="4" fill="#ececec"/><rect x="92.5" y="793" width="3.5" height="4" fill="#777"/><rect x="98.0" y="793" width="3.5" height="4" fill="#ececec"/>
<path d="M81 815 Q81 810 94 810 Q107 810 107 815 L107 835 Q107 840 94 840 Q81 840 81 835 Z" fill="url(#gDb)"/><ellipse cx="94" cy="815" rx="11" ry="3.5" fill="#cfcfcf"/><rect x="87.0" y="821" width="3.5" height="4" fill="#ececec"/><rect x="92.5" y="821" width="3.5" height="4" fill="#777"/><rect x="98.0" y="821" width="3.5" height="4" fill="#ececec"/><rect x="87.0" y="827" width="3.5" height="4" fill="#ececec"/><rect x="92.5" y="827" width="3.5" height="4" fill="#777"/><rect x="98.0" y="827" width="3.5" height="4" fill="#ececec"/><rect x="87.0" y="833" width="3.5" height="4" fill="#ececec"/><rect x="92.5" y="833" width="3.5" height="4" fill="#777"/><rect x="98.0" y="833" width="3.5" height="4" fill="#ececec"/>
<path d="M81 855 Q81 850 94 850 Q107 850 107 855 L107 875 Q107 880 94 880 Q81 880 81 875 Z" fill="url(#gDbY)"/><ellipse cx="94" cy="855" rx="11" ry="3.5" fill="#d8e860"/><rect x="87.0" y="861" width="3.5" height="4" fill="#f0f8c0"/><rect x="92.5" y="861" width="3.5" height="4" fill="#6a8000"/><rect x="98.0" y="861" width="3.5" height="4" fill="#f0f8c0"/><rect x="87.0" y="867" width="3.5" height="4" fill="#f0f8c0"/><rect x="92.5" y="867" width="3.5" height="4" fill="#6a8000"/><rect x="98.0" y="867" width="3.5" height="4" fill="#f0f8c0"/><rect x="87.0" y="873" width="3.5" height="4" fill="#f0f8c0"/><rect x="92.5" y="873" width="3.5" height="4" fill="#6a8000"/><rect x="98.0" y="873" width="3.5" height="4" fill="#f0f8c0"/>
<path d="M48 860 L56 868 L64 860" fill="none" stroke="#404040" stroke-width="3.2"/>
<rect x="117" y="892" width="32" height="27" fill="#a0a0a0"/><rect x="119" y="897" width="28" height="20" fill="#fff"/><rect x="119" y="897" width="28" height="6" fill="#4ab0d8"/><rect x="119" y="897" width="8" height="20" fill="#4ab0d8"/>
<rect x="127" y="908" width="20" height="1.5" fill="#aaa"/><rect x="127" y="913" width="20" height="1.5" fill="#aaa"/><rect x="136" y="903" width="1.5" height="14" fill="#aaa"/>
<rect x="138" y="893.5" width="2" height="2" fill="#444"/><rect x="141" y="893.5" width="2" height="2" fill="#444"/><rect x="144" y="893.5" width="2" height="2" fill="#444"/>
<path d="M120 943 L125 937 M144 943 L139 937" stroke="#555" stroke-width="2" fill="none"/>
<rect x="118" y="943" width="12" height="10" rx="4" fill="#8ec8e8" stroke="#222" stroke-width="2.5"/><rect x="134" y="943" width="12" height="10" rx="4" fill="#8ec8e8" stroke="#222" stroke-width="2.5"/><rect x="129" y="946" width="6" height="2.5" fill="#222"/>
<path d="M118 996 Q123 997 125 990 L130 975 Q132 970 138 971" fill="none" stroke="#5a90c8" stroke-width="2.6"/><path d="M123 980 L133 980" stroke="#5a90c8" stroke-width="2"/>
<path d="M139 982 Q135 989 138 996 M144 982 Q148 989 144 996" fill="none" stroke="#7aa0c8" stroke-width="2"/>
<path d="M90 978 L98 986 L90 994" fill="none" stroke="#888" stroke-width="3.2"/>
<rect x="121" y="1011" width="27" height="26" fill="#9a9a9a"/><rect x="123" y="1015" width="23" height="20" fill="#fff"/><rect x="123" y="1015" width="23" height="4" fill="#5ab4d8"/><rect x="123" y="1015" width="6" height="20" fill="#5ab4d8"/>
<rect x="138" y="1013" width="2" height="1.5" fill="#444"/><rect x="142" y="1013" width="2" height="1.5" fill="#444"/>
<rect x="129" y="1024" width="17" height="1.5" fill="#aaa"/><rect x="129" y="1029" width="17" height="1.5" fill="#aaa"/><rect x="137" y="1019" width="1.5" height="16" fill="#aaa"/>
<circle cx="126" cy="1032" r="8" fill="#fff" stroke="#6a6a6a" stroke-width="2"/><path d="M122 1030 L126 1033 L130 1029" stroke="#3a8ab0" stroke-width="1.6" fill="none"/>
<rect x="117" y="1051" width="24" height="20" fill="#999"/><rect x="119" y="1055" width="20" height="14" fill="#5ab4d8"/>
<rect x="125" y="1059" width="24" height="21" fill="#999"/><rect x="127" y="1062" width="20" height="16" fill="#fff"/><rect x="127" y="1062" width="6" height="16" fill="#5ab4d8"/>
<rect x="134" y="1066" width="13" height="1.5" fill="#aaa"/><rect x="134" y="1071" width="13" height="1.5" fill="#aaa"/><rect x="139" y="1062" width="1.5" height="16" fill="#aaa"/>
<path d="M118 1091 L136 1091 L142 1097 L142 1120 L118 1120 Z" fill="#eef2fa" stroke="#999" stroke-width="2"/>
<rect x="120" y="1095" width="18" height="1.5" fill="#9ab0d0"/>
<rect x="120" y="1100" width="18" height="1.5" fill="#9ab0d0"/>
<rect x="120" y="1105" width="18" height="1.5" fill="#9ab0d0"/>
<rect x="120" y="1110" width="18" height="1.5" fill="#9ab0d0"/>
<rect x="120" y="1115" width="18" height="1.5" fill="#9ab0d0"/>
<rect x="128" y="1110" width="6" height="10" fill="#60b030"/><rect x="135" y="1101" width="6" height="19" fill="#e04030"/><rect x="142" y="1106" width="6" height="14" fill="#40a8e0"/>
<rect x="118" y="1133" width="30" height="22" rx="2" fill="#f4f4f4" stroke="#888" stroke-width="2"/><circle cx="127" cy="1144" r="4" fill="#666"/><circle cx="139" cy="1144" r="4" fill="#666"/><rect x="127" y="1142" width="12" height="4" fill="#888"/>
<path d="M81 1175 Q81 1170 94 1170 Q107 1170 107 1175 L107 1195 Q107 1200 94 1200 Q81 1200 81 1195 Z" fill="url(#gDb)"/><ellipse cx="94" cy="1175" rx="11" ry="3.5" fill="#cfcfcf"/><rect x="87.0" y="1181" width="3.5" height="4" fill="#ececec"/><rect x="92.5" y="1181" width="3.5" height="4" fill="#777"/><rect x="98.0" y="1181" width="3.5" height="4" fill="#ececec"/><rect x="87.0" y="1187" width="3.5" height="4" fill="#ececec"/><rect x="92.5" y="1187" width="3.5" height="4" fill="#777"/><rect x="98.0" y="1187" width="3.5" height="4" fill="#ececec"/><rect x="87.0" y="1193" width="3.5" height="4" fill="#ececec"/><rect x="92.5" y="1193" width="3.5" height="4" fill="#777"/><rect x="98.0" y="1193" width="3.5" height="4" fill="#ececec"/>
<path d="M81 1215 Q81 1210 94 1210 Q107 1210 107 1215 L107 1235 Q107 1240 94 1240 Q81 1240 81 1235 Z" fill="url(#gDb)"/><ellipse cx="94" cy="1215" rx="11" ry="3.5" fill="#cfcfcf"/><rect x="87.0" y="1221" width="3.5" height="4" fill="#ececec"/><rect x="92.5" y="1221" width="3.5" height="4" fill="#777"/><rect x="98.0" y="1221" width="3.5" height="4" fill="#ececec"/><rect x="87.0" y="1227" width="3.5" height="4" fill="#ececec"/><rect x="92.5" y="1227" width="3.5" height="4" fill="#777"/><rect x="98.0" y="1227" width="3.5" height="4" fill="#ececec"/><rect x="87.0" y="1233" width="3.5" height="4" fill="#ececec"/><rect x="92.5" y="1233" width="3.5" height="4" fill="#777"/><rect x="98.0" y="1233" width="3.5" height="4" fill="#ececec"/>
<path d="M81 1255 Q81 1250 94 1250 Q107 1250 107 1255 L107 1275 Q107 1280 94 1280 Q81 1280 81 1275 Z" fill="url(#gDb)"/><ellipse cx="94" cy="1255" rx="11" ry="3.5" fill="#cfcfcf"/><rect x="87.0" y="1261" width="3.5" height="4" fill="#ececec"/><rect x="92.5" y="1261" width="3.5" height="4" fill="#777"/><rect x="98.0" y="1261" width="3.5" height="4" fill="#ececec"/><rect x="87.0" y="1267" width="3.5" height="4" fill="#ececec"/><rect x="92.5" y="1267" width="3.5" height="4" fill="#777"/><rect x="98.0" y="1267" width="3.5" height="4" fill="#ececec"/><rect x="87.0" y="1273" width="3.5" height="4" fill="#ececec"/><rect x="92.5" y="1273" width="3.5" height="4" fill="#777"/><rect x="98.0" y="1273" width="3.5" height="4" fill="#ececec"/>
<path d="M81 1295 Q81 1290 94 1290 Q107 1290 107 1295 L107 1315 Q107 1320 94 1320 Q81 1320 81 1315 Z" fill="url(#gDb)"/><ellipse cx="94" cy="1295" rx="11" ry="3.5" fill="#cfcfcf"/><rect x="87.0" y="1301" width="3.5" height="4" fill="#ececec"/><rect x="92.5" y="1301" width="3.5" height="4" fill="#777"/><rect x="98.0" y="1301" width="3.5" height="4" fill="#ececec"/><rect x="87.0" y="1307" width="3.5" height="4" fill="#ececec"/><rect x="92.5" y="1307" width="3.5" height="4" fill="#777"/><rect x="98.0" y="1307" width="3.5" height="4" fill="#ececec"/><rect x="87.0" y="1313" width="3.5" height="4" fill="#ececec"/><rect x="92.5" y="1313" width="3.5" height="4" fill="#777"/><rect x="98.0" y="1313" width="3.5" height="4" fill="#ececec"/>
<path d="M81 1335 Q81 1330 94 1330 Q107 1330 107 1335 L107 1355 Q107 1360 94 1360 Q81 1360 81 1355 Z" fill="url(#gDb)"/><ellipse cx="94" cy="1335" rx="11" ry="3.5" fill="#cfcfcf"/><rect x="87.0" y="1341" width="3.5" height="4" fill="#ececec"/><rect x="92.5" y="1341" width="3.5" height="4" fill="#777"/><rect x="98.0" y="1341" width="3.5" height="4" fill="#ececec"/><rect x="87.0" y="1347" width="3.5" height="4" fill="#ececec"/><rect x="92.5" y="1347" width="3.5" height="4" fill="#777"/><rect x="98.0" y="1347" width="3.5" height="4" fill="#ececec"/><rect x="87.0" y="1353" width="3.5" height="4" fill="#ececec"/><rect x="92.5" y="1353" width="3.5" height="4" fill="#777"/><rect x="98.0" y="1353" width="3.5" height="4" fill="#ececec"/>
</svg>
<div class="a" style="left:617px;top:1291px;width:257px;height:36px;background:#ececec"></div>
<div class="t" style="left:622px;top:252px;letter-spacing:0.8px;-webkit-text-stroke:0.12px #000">addBankCard</div>
<div class="t" style="left:622px;top:288px;letter-spacing:0.8px;-webkit-text-stroke:0.12px #000">AddGold</div>
<div class="t" style="left:622px;top:324px;letter-spacing:0.8px;-webkit-text-stroke:0.12px #000">AddGoldSub</div>
<div class="t" style="left:622px;top:360px;letter-spacing:0.8px;-webkit-text-stroke:0.12px #000">addPrize</div>
<div class="t" style="left:622px;top:396px;letter-spacing:0.8px;-webkit-text-stroke:0.12px #000">changeOfficial</div>
<div class="t" style="left:622px;top:432px;letter-spacing:0.8px;-webkit-text-stroke:0.12px #000">checkPhone</div>
<div class="t" style="left:622px;top:468px;letter-spacing:0.8px;-webkit-text-stroke:0.12px #000">copyhand</div>
<div class="t" style="left:622px;top:504px;letter-spacing:0.8px;-webkit-text-stroke:0.12px #000">createRecharge</div>
<div class="t" style="left:622px;top:540px;letter-spacing:0.8px;-webkit-text-stroke:0.12px #000">createUser</div>
<div class="t" style="left:622px;top:576px;letter-spacing:0.8px;-webkit-text-stroke:0.12px #000">dongshanzaiqi</div>
<div class="t" style="left:622px;top:612px;letter-spacing:0.8px;-webkit-text-stroke:0.12px #000">EditTicket</div>
<div class="t" style="left:622px;top:648px;letter-spacing:0.8px;-webkit-text-stroke:0.12px #000">firstexchange</div>
<div class="t" style="left:622px;top:684px;letter-spacing:0.8px;-webkit-text-stroke:0.12px #000">getPrize</div>
<div class="t" style="left:622px;top:720px;letter-spacing:0.8px;-webkit-text-stroke:0.12px #000">getSendPrize</div>
<div class="t" style="left:622px;top:756px;letter-spacing:0.8px;-webkit-text-stroke:0.12px #000">LoginaddTempScore</div>
<div class="t" style="left:622px;top:792px;letter-spacing:0.8px;-webkit-text-stroke:0.12px #000">LoginByPhone</div>
<div class="t" style="left:622px;top:828px;letter-spacing:0.8px;-webkit-text-stroke:0.12px #000">LoginByUserPass</div>
<div class="t" style="left:622px;top:864px;letter-spacing:0.8px;-webkit-text-stroke:0.12px #000">mark</div>
<div class="t" style="left:622px;top:900px;letter-spacing:0.8px;-webkit-text-stroke:0.12px #000">numP</div>
<div class="t" style="left:622px;top:936px;letter-spacing:0.8px;-webkit-text-stroke:0.12px #000">passwordLogin</div>
<div class="t" style="left:622px;top:972px;letter-spacing:0.8px;-webkit-text-stroke:0.12px #000">qureyFee</div>
<div class="t" style="left:622px;top:1008px;letter-spacing:0.8px;-webkit-text-stroke:0.12px #000">qureyPC</div>
<div class="t" style="left:622px;top:1044px;letter-spacing:0.8px;-webkit-text-stroke:0.12px #000">qureyPCV</div>
<div class="t" style="left:622px;top:1080px;letter-spacing:0.8px;-webkit-text-stroke:0.12px #000">recharge_first</div>
<div class="t" style="left:622px;top:1116px;letter-spacing:0.8px;-webkit-text-stroke:0.12px #000">robotname</div>
<div class="t" style="left:622px;top:1152px;letter-spacing:0.8px;-webkit-text-stroke:0.12px #000">selectlotterylog</div>
<div class="t" style="left:622px;top:1188px;letter-spacing:0.8px;-webkit-text-stroke:0.12px #000">sendEmail</div>
<div class="t" style="left:622px;top:1224px;letter-spacing:0.8px;-webkit-text-stroke:0.12px #000">tempaddscore</div>
<div class="t" style="left:622px;top:1260px;letter-spacing:0.8px;-webkit-text-stroke:0.12px #000">tempname</div>
<div class="t" style="left:622px;top:1296px;letter-spacing:0.8px;-webkit-text-stroke:0.12px #000">update_recharge_first</div>
<div class="t" style="left:622px;top:1332px;letter-spacing:0.8px;-webkit-text-stroke:0.12px #000">updateProp</div>
<div class="t" style="left:622px;top:1368px;letter-spacing:0.8px;-webkit-text-stroke:0.12px #000">updateRecharge</div>
<div class="t" style="left:622px;top:1404px;letter-spacing:0.8px;-webkit-text-stroke:0.12px #000">updateScoreOut</div>
<div class="t" style="left:622px;top:1440px;letter-spacing:0.8px;-webkit-text-stroke:0.12px #000">useLoginCode</div>
<div class="t" style="left:622px;top:1476px;letter-spacing:0.8px;-webkit-text-stroke:0.12px #000">weixinCreateUser</div>
<svg style="left:580px;top:240px" width="60" height="1280" viewBox="580 240 60 1280">
<defs><linearGradient id="gP" x1="0" y1="0" x2="0" y2="1"><stop offset="0" stop-color="#90e868"/><stop offset="1" stop-color="#5cc040"/></linearGradient></defs>
<symbol id="pIcon" viewBox="0 0 30 30" overflow="visible"><text x="0" y="25" font-family="Liberation Serif" font-style="italic" font-weight="bold" font-size="30" fill="url(#gP)" stroke="#3f9a3a" stroke-width="0.9">P</text><path d="M20.5 16 Q17.5 22 19.5 29 M26 16 Q29 22 24 29" fill="none" stroke="#6aa868" stroke-width="2.2"/></symbol>
<use href="#pIcon" x="585" y="246" width="30" height="30"/>
<use href="#pIcon" x="585" y="282" width="30" height="30"/>
<use href="#pIcon" x="585" y="318" width="30" height="30"/>
<use href="#pIcon" x="585" y="354" width="30" height="30"/>
<use href="#pIcon" x="585" y="390" width="30" height="30"/>
<use href="#pIcon" x="585" y="426" width="30" height="30"/>
<use href="#pIcon" x="585" y="462" width="30" height="30"/>
<use href="#pIcon" x="585" y="498" width="30" height="30"/>
<use href="#pIcon" x="585" y="534" width="30" height="30"/>
<use href="#pIcon" x="585" y="570" width="30" height="30"/>
<use href="#pIcon" x="585" y="606" width="30" height="30"/>
<use href="#pIcon" x="585" y="642" width="30" height="30"/>
<use href="#pIcon" x="585" y="678" width="30" height="30"/>
<use href="#pIcon" x="585" y="714" width="30" height="30"/>
<use href="#pIcon" x="585" y="750" width="30" height="30"/>
<use href="#pIcon" x="585" y="786" width="30" height="30"/>
<use href="#pIcon" x="585" y="822" width="30" height="30"/>
<use href="#pIcon" x="585" y="858" width="30" height="30"/>
<use href="#pIcon" x="585" y="894" width="30" height="30"/>
<use href="#pIcon" x="585" y="930" width="30" height="30"/>
<use href="#pIcon" x="585" y="966" width="30" height="30"/>
<use href="#pIcon" x="585" y="1002" width="30" height="30"/>
<use href="#pIcon" x="585" y="1038" width="30" height="30"/>
<use href="#pIcon" x="585" y="1074" width="30" height="30"/>
<use href="#pIcon" x="585" y="1110" width="30" height="30"/>
<use href="#pIcon" x="585" y="1146" width="30" height="30"/>
<use href="#pIcon" x="585" y="1182" width="30" height="30"/>
<use href="#pIcon" x="585" y="1218" width="30" height="30"/>
<use href="#pIcon" x="585" y="1254" width="30" height="30"/>
<use href="#pIcon" x="585" y="1290" width="30" height="30"/>
<use href="#pIcon" x="585" y="1326" width="30" height="30"/>
<use href="#pIcon" x="585" y="1362" width="30" height="30"/>
<use href="#pIcon" x="585" y="1398" width="30" height="30"/>
<use href="#pIcon" x="585" y="1434" width="30" height="30"/>
<use href="#pIcon" x="585" y="1470" width="30" height="30"/>
</svg>
<div class="a" style="left:569px;top:814px;width:12px;height:200px;background:#f4f4f4;border-top:2px solid #8a8a8a;border-bottom:2px solid #8a8a8a"></div><svg style="left:571px;top:826px" width="8" height="180"><path d="M1 7L7 1L7 13Z M1 171L7 165L7 177Z" fill="#555"/></svg><div class="a" style="left:2872px;top:242px;width:2px;height:1395px;background:#828282"></div><div class="a" style="left:2872px;top:186px;width:2px;height:2px;background:#000"></div>
<div class="a" style="left:0px;top:1636px;width:2874px;height:2px;background:#7a7a7a"></div>
<div class="t" style="left:0;top:1649px;letter-spacing:0.4px">已选择 1 个对象</div>
<div class="a" style="left:491px;top:1645px;width:2px;height:19px;background:#d0d0d0"></div>
<svg style="left:500px;top:1644px" width="40" height="20"><rect x="10" y="0" width="16" height="20" fill="#c8c8c8" stroke="#888"/><rect x="13" y="3" width="10" height="2" fill="#fff"/><ellipse cx="8" cy="18" rx="7" ry="6" fill="#c8e818"/><path d="M26 12 L33 5 L33 11" fill="none" stroke="#a8d020" stroke-width="3.5"/></svg>
<div class="t" style="left:543px;top:1649px">藏宝库王者归来</div>
<div class="t" style="left:734px;top:1649px;letter-spacing:0.8px">用户: root</div>
<div class="t" style="left:871px;top:1649px;letter-spacing:0.6px">数据库: test</div>
<div class="a" style="left:2680px;top:1638px;font-size:21px;line-height:24px;white-space:nowrap;letter-spacing:-0.3px;color:#222">藏宝库it社区@Adam</div>
<div class="a" style="left:1009px;top:268px;width:1525px;height:1184px;background:#f0f0f0;border:2px solid #6a6a6a;box-shadow:3px 5px 18px rgba(0,0,0,0.30)"></div>
<div class="a" style="left:1011px;top:270px;width:1521px;height:60px;background:#fff"></div>
<div class="t" style="left:1064px;top:287px;letter-spacing:0.5px;-webkit-text-stroke:0.15px #000">update_recharge_first @test (藏宝库王者归来) - 过程</div>
<svg style="left:1025px;top:282px" width="34" height="34"><defs><linearGradient id="gP2" x1="0" y1="0" x2="0" y2="1"><stop offset="0" stop-color="#7ad840"/><stop offset="1" stop-color="#48b030"/></linearGradient></defs><text x="1" y="26" font-family="Liberation Serif" font-style="italic" font-weight="bold" font-size="31" fill="url(#gP2)">P</text><path d="M22 18 Q19 24 21 31 M28 18 Q31 24 26 31" fill="none" stroke="#78b868" stroke-width="2.4"/></svg>
<div class="a" style="left:2291px;top:297px;width:20px;height:2px;background:#000"></div>
<div class="a" style="left:2382px;top:288px;width:20px;height:20px;border:2px solid #000"></div>
<svg style="left:2475px;top:288px" width="20" height="20"><path d="M1 1L19 19M19 1L1 19" stroke="#000" stroke-width="2.2"/></svg>
<div class="t" style="left:1022px;top:345px;">文件</div>
<div class="t" style="left:1121px;top:345px;">编辑</div>
<div class="t" style="left:1221px;top:345px;">查看</div>
<div class="t" style="left:1323px;top:345px;">窗口</div>
<div class="t" style="left:1433px;top:345px;">帮助</div>
<div class="a" style="left:1011px;top:385px;width:1521px;height:2px;background:#b4b4b4"></div>
<div class="a" style="left:1011px;top:387px;width:1521px;height:2px;background:#fff"></div>
<div class="t" style="left:1061px;top:402px;">新建</div>
<div class="t" style="left:1167px;top:402px;">保存</div>
<div class="t" style="left:1273px;top:402px;">另存为</div>
<div class="t" style="left:1430px;top:402px;">运行</div>
<div class="t" style="left:1537px;top:402px;">停止</div>
<div class="t" style="left:1671px;top:402px;">查找</div>
<div class="t" style="left:1778px;top:402px;">自动换行</div>
<div class="a" style="left:1369px;top:392px;width:2px;height:45px;background:#c8c8c8"></div>
<div class="a" style="left:1371px;top:392px;width:2px;height:45px;background:#fff"></div>
<div class="a" style="left:1610px;top:392px;width:2px;height:45px;background:#c8c8c8"></div>
<div class="a" style="left:1612px;top:392px;width:2px;height:45px;background:#fff"></div>
<svg style="left:1010px;top:390px" width="780" height="45" viewBox="1010 390 780 45">
<path d="M1022 425 Q1028 426 1030 419 L1035 404 Q1037 398 1043 399" fill="none" stroke="#4a90d0" stroke-width="2.6"/><path d="M1027 408 L1039 408" stroke="#4a90d0" stroke-width="2.2"/>
<circle cx="1045" cy="420" r="7.5" fill="#2aa040"/><rect x="1040" y="418.8" width="10" height="2.6" fill="#fff"/><rect x="1043.7" y="415" width="2.6" height="10" fill="#fff"/>
<rect x="1128" y="398" width="29" height="28" fill="#1c2434"/><rect x="1132" y="399" width="21" height="4" fill="#f08a10"/><rect x="1132" y="403" width="21" height="9" fill="#e4e8f0"/><rect x="1135" y="416" width="15" height="10" fill="#c0c0c0"/><rect x="1137" y="418" width="3" height="6" fill="#333"/>
<rect x="1233" y="398" width="29" height="28" fill="#1c2434"/><rect x="1237" y="399" width="21" height="4" fill="#f08a10"/><rect x="1237" y="403" width="21" height="9" fill="#e4e8f0"/><rect x="1240" y="416" width="15" height="10" fill="#c0c0c0"/><rect x="1242" y="418" width="3" height="6" fill="#333"/>
<rect x="1240" y="405" width="29" height="28" fill="#1c2434"/><rect x="1244" y="406" width="21" height="4" fill="#f08a10"/><rect x="1244" y="410" width="21" height="9" fill="#e4e8f0"/><rect x="1247" y="423" width="15" height="10" fill="#c0c0c0"/><rect x="1249" y="425" width="3" height="6" fill="#333"/>
<path d="M1398 399 L1420 413 L1398 427 Z" fill="#5cd040" stroke="#3a9a28" stroke-width="2"/>
<rect x="1499" y="399" width="28" height="27" fill="#d80000" stroke="#a00000" stroke-width="2.2"/><rect x="1502" y="402" width="22" height="5" fill="#f07070"/>
<circle cx="1644" cy="410" r="10.5" fill="#eaf2ff" stroke="#6a7a90" stroke-width="2.6"/><path d="M1652 418 L1661 427" stroke="#333" stroke-width="4"/>
<rect x="1738" y="398" width="31" height="26" fill="#fff" stroke="#999" stroke-width="2.4"/><rect x="1739" y="399" width="29" height="4" fill="#bbb"/>
<rect x="1742" y="406" width="14" height="2" fill="#9ab8c8"/>
<rect x="1742" y="412" width="16" height="2" fill="#9ab8c8"/>
<rect x="1742" y="417" width="16" height="2" fill="#9ab8c8"/>
<rect x="1742" y="421" width="12" height="2" fill="#9ab8c8"/>
<path d="M1763 405 L1765 412 L1757 418" fill="none" stroke="#d02020" stroke-width="2.6"/>
</svg>
<div class="a" style="left:1013px;top:442px;width:1517px;height:2px;background:#b4b4b4"></div>
<div class="a" style="left:1013px;top:444px;width:1517px;height:2px;background:#fff"></div>
<div class="a" style="left:1013px;top:495px;width:1515px;height:916px;background:#fff;border-top:2px solid #d9d9d9"></div>
<div class="a" style="left:1113px;top:450px;width:92px;height:47px;background:#f0f0f0;border:2px solid #d9d9d9;border-bottom:none"></div>
<div class="a" style="left:1203px;top:450px;width:100px;height:47px;background:#f0f0f0;border:2px solid #d9d9d9;border-bottom:none"></div>
<div class="a" style="left:1301px;top:450px;width:123px;height:47px;background:#f0f0f0;border:2px solid #d9d9d9;border-bottom:none"></div>
<div class="a" style="left:1012px;top:446px;width:102px;height:53px;background:#fff;border:2px solid #d9d9d9;border-bottom:none"></div>
<div class="t" style="left:1027px;top:457px;">定义</div>
<div class="t" style="left:1123px;top:462px;">高级</div>
<div class="t" style="left:1218px;top:462px;">注释</div>
<div class="t" style="left:1316px;top:462px;letter-spacing:0.5px">SQL 预览</div>
<div class="a" style="left:1019px;top:502px;width:1504px;height:711px;background:#fff;border-top:2px solid #a0a0a0;border-left:2px solid #a0a0a0"></div>
<div class="a" style="left:1021px;top:504px;width:55px;height:677px;background:#f0f0f0"></div>
<div class="a" style="left:1076px;top:504px;width:27px;height:677px;background-color:#f4f4f4;background-image:linear-gradient(45deg,#fff 25%,transparent 25%,transparent 75%,#fff 75%),linear-gradient(45deg,#fff 25%,transparent 25%,transparent 75%,#fff 75%);background-size:4px 4px;background-position:0 0,2px 2px"></div>
<div class="code" style="left:1054px;top:506px">1</div>
<div class="code" style="left:1054px;top:538px">2</div>
<div class="code" style="left:1054px;top:570px">3</div>
<div class="code" style="left:1054px;top:602px">4</div>
<div class="code" style="left:1054px;top:634px">5</div>
<div class="code" style="left:1054px;top:666px">6</div>
<div class="code" style="left:1054px;top:698px">7</div>
<div class="code" style="left:1054px;top:730px">8</div>
<div class="code" style="left:1054px;top:762px">9</div>
<div class="code" style="left:1038px;top:794px">10</div>
<div class="code" style="left:1038px;top:826px">11</div>
<div class="code" style="left:1038px;top:858px">12</div>
<div class="code" style="left:1038px;top:890px">13</div>
<div class="code" style="left:1038px;top:922px">14</div>
<div class="code" style="left:1038px;top:954px">15</div>
<div class="code" style="left:1038px;top:986px">16</div>
<div class="code" style="left:1038px;top:1018px">17</div>
<div class="code" style="left:1038px;top:1050px">18</div>
<div class="code" style="left:1038px;top:1082px">19</div>
<div class="code" style="left:1038px;top:1114px">20</div>
<div class="code" style="left:1038px;top:1146px">21</div>
<div class="a" style="left:1089px;top:529px;width:2px;height:652px;background:#808080"></div>
<div class="a" style="left:1081px;top:512px;width:18px;height:18px;background:#fff;border:2px solid #808080"></div>
<div class="a" style="left:1085px;top:520px;width:10px;height:2px;background:#606060"></div>
<div class="a" style="left:1081px;top:832px;width:18px;height:18px;background:#fff;border:2px solid #808080"></div>
<div class="a" style="left:1085px;top:840px;width:10px;height:2px;background:#606060"></div>
<div class="a" style="left:1081px;top:896px;width:18px;height:18px;background:#fff;border:2px solid #808080"></div>
<div class="a" style="left:1085px;top:904px;width:10px;height:2px;background:#606060"></div>
<div class="a" style="left:1081px;top:960px;width:18px;height:18px;background:#fff;border:2px solid #808080"></div>
<div class="a" style="left:1085px;top:968px;width:10px;height:2px;background:#606060"></div>
<div class="a" style="left:1081px;top:1088px;width:18px;height:18px;background:#fff;border:2px solid #808080"></div>
<div class="a" style="left:1085px;top:1096px;width:10px;height:2px;background:#606060"></div>
<div class="a" style="left:1089px;top:1068px;width:10px;height:2px;background:#808080"></div>
<div class="a" style="left:1105px;top:504px;width:78px;height:32px;background:#88ffff"></div>
<div class="a" style="left:1103px;top:504px;width:2px;height:32px;background:#000"></div>
<div class="a" style="left:1103px;top:504px;width:1384px;height:677px;overflow:hidden">
<div class="code" style="left:1px;top:2px">BEGIN</div>
<div class="code" style="left:1px;top:34px">  <span class="k">SELECT</span> <span class="k">FIRST</span>,anyFirst,daytime,goods1,goods2,goods3,goods4,goods5 <span class="k">INTO</span> @<span class="k">first</span>,@anyFirst,@daytime</div>
<div class="code" style="left:1px;top:66px">  <span class="k">SET</span> @c_anyFirst = <span class="n">0</span>;</div>
<div class="code" style="left:1px;top:98px">  <span class="k">SET</span> @c_first = <span class="n">0</span>;</div>
<div class="code" style="left:1px;top:130px">  <span class="k">SET</span> @c_goods1 = <span class="n">0</span>;</div>
<div class="code" style="left:1px;top:162px">  <span class="k">SET</span> @c_goods2 = <span class="n">0</span>;</div>
<div class="code" style="left:1px;top:194px">  <span class="k">SET</span> @c_goods3 = <span class="n">0</span>;</div>
<div class="code" style="left:1px;top:226px">  <span class="k">SET</span> @c_goods4 = <span class="n">0</span>;</div>
<div class="code" style="left:1px;top:258px">  <span class="k">SET</span> @c_goods5 = <span class="n">0</span>;</div>
<div class="code" style="left:1px;top:290px">  <span class="c">-- </span><span class="c" style="letter-spacing:4px;font-family:'Liberation Sans',sans-serif;font-size:28px;position:relative;top:-4px">是否为当天</span></div>
<div class="code" style="left:1px;top:322px">  <span class="k">IF</span> TO_DAYS(@dtimex)=TO_DAYS(NOW()) <span class="k">THEN</span></div>
<div class="code" style="left:1px;top:354px">    <span class="c">-- </span><span class="c" style="letter-spacing:4px;font-family:'Liberation Sans',sans-serif;font-size:28px;position:relative;top:-4px">当天登录，当天充值</span></div>
<div class="code" style="left:1px;top:386px">    <span class="k">if</span> goodsid = <span class="n">1</span> <span class="k">then</span></div>
<div class="code" style="left:1px;top:418px">      <span class="k">UPDATE</span> recharge_first <span class="k">SET</span> anyFirst = <span class="n">1</span>, goods1 = <span class="n">1</span> <span class="k">WHERE</span> userId = userIdx;</div>
<div class="code" style="left:1px;top:450px">      <span class="k">IF</span> @anyFirst = <span class="n">0</span> <span class="k">THEN</span></div>
<div class="code" style="left:1px;top:482px">        <span class="k">SET</span> @c_anyFirst = <span class="n">1</span>;</div>
<div class="code" style="left:1px;top:514px">        <span class="k">SET</span> @anyFirst = <span class="n">1</span>;</div>
<div class="code" style="left:1px;top:546px">      <span class="k">END</span> <span class="k">IF</span>;</div>
<div class="code" style="left:1px;top:578px">      <span class="k">if</span> @goods1 = <span class="n">0</span> <span class="k">then</span></div>
<div class="code" style="left:1px;top:610px">        <span class="k">SET</span> @c_goods1 = <span class="n">1</span>;</div>
<div class="code" style="left:1px;top:642px">        <span class="k">SET</span> @goods1 = <span class="n">1</span>;</div>
</div>
<div class="a" style="left:2490px;top:504px;width:32px;height:677px;background:#f0f0f0"></div>
<div class="a" style="left:2491px;top:539px;width:29px;height:117px;background:#cdcdcd"></div>
<svg style="left:2498px;top:515px" width="14" height="12"><path d="M1 10L7 3L13 10" fill="none" stroke="#606060" stroke-width="3"/></svg>
<svg style="left:2498px;top:1157px" width="14" height="12"><path d="M1 2L7 9L13 2" fill="none" stroke="#606060" stroke-width="3"/></svg>
<div class="a" style="left:1021px;top:1181px;width:1501px;height:31px;background:#f0f0f0"></div>
<div class="a" style="left:1055px;top:1181px;width:672px;height:30px;background:#cdcdcd"></div>
<svg style="left:1031px;top:1189px" width="12" height="14"><path d="M10 1L3 7L10 13" fill="none" stroke="#606060" stroke-width="3"/></svg>
<svg style="left:2466px;top:1189px" width="12" height="14"><path d="M2 1L9 7L2 13" fill="none" stroke="#606060" stroke-width="3"/></svg>
<div class="t" style="left:1035px;top:1241px;">参数:</div>
<div class="a" style="left:1339px;top:1231px;width:849px;height:50px;background:#fff;border:2px solid #7a7a7a"></div>
<div class="t" style="left:1346px;top:1243px;letter-spacing:1.1px;-webkit-text-stroke:0.12px #000">userIdx INT(11),goodsid int(2)</div>
<div class="t" style="left:1034px;top:1295px;">返回类型:</div>
<div class="a" style="left:1339px;top:1283px;width:600px;height:50px;background:#f0f0f0;border:2px solid #cacaca;box-shadow:inset 0 0 0 2px #fff"></div>
<div class="t" style="left:1034px;top:1347px;">类型:</div>
<div class="a" style="left:1339px;top:1335px;width:600px;height:50px;background:#e1e1e1;border:2px solid #a8a8a8"></div>
<div class="t" style="left:1348px;top:1349px;letter-spacing:-0.9px;-webkit-text-stroke:0.12px #000">PROCEDURE</div>
<svg style="left:1913px;top:1356px" width="16" height="10"><path d="M1 1L8 8L15 1" fill="none" stroke="#404040" stroke-width="2"/></svg>
<div class="a" style="left:1011px;top:1409px;width:1521px;height:2px;background:#d4d4d4"></div>
<div class="a" style="left:1011px;top:1413px;width:1521px;height:2px;background:#d0d0d0"></div>
<div class="a" style="left:1011px;top:1415px;width:1521px;height:36px;background:#f0f0f0"></div>
<div class="t" style="left:1017px;top:1422px;">自动完成代码就绪</div>
<div class="a" style="left:1409px;top:1425px;width:2px;height:24px;background:#d0d0d0"></div>
<div class="a" style="left:2524px;top:1426px;width:4px;height:4px;background:#a0a0a0"></div>
<div class="a" style="left:2516px;top:1434px;width:4px;height:4px;background:#a0a0a0"></div>
<div class="a" style="left:2524px;top:1434px;width:4px;height:4px;background:#a0a0a0"></div>
<div class="a" style="left:2508px;top:1442px;width:4px;height:4px;background:#a0a0a0"></div>
<div class="a" style="left:2516px;top:1442px;width:4px;height:4px;background:#a0a0a0"></div>
<div class="a" style="left:2524px;top:1442px;width:4px;height:4px;background:#a0a0a0"></div>
<svg style="left:0;top:0;pointer-events:none" width="2874" height="1664" viewBox="0 0 2874 1664">
<defs><mask id="wmMask" maskUnits="userSpaceOnUse" x="0" y="0" width="2874" height="1664"><rect x="0" y="0" width="2874" height="1664" fill="#fff"/>
<rect x="130" y="167" width="140" height="66" fill="#000"/>
<rect x="130" y="567" width="140" height="66" fill="#000"/>
<rect x="130" y="967" width="140" height="66" fill="#000"/>
<rect x="130" y="1367" width="140" height="66" fill="#000"/>
<rect x="530" y="167" width="140" height="66" fill="#000"/>
<rect x="530" y="567" width="140" height="66" fill="#000"/>
<rect x="530" y="967" width="140" height="66" fill="#000"/>
<rect x="530" y="1367" width="140" height="66" fill="#000"/>
<rect x="930" y="167" width="140" height="66" fill="#000"/>
<rect x="930" y="567" width="140" height="66" fill="#000"/>
<rect x="930" y="967" width="140" height="66" fill="#000"/>
<rect x="930" y="1367" width="140" height="66" fill="#000"/>
<rect x="1330" y="167" width="140" height="66" fill="#000"/>
<rect x="1330" y="567" width="140" height="66" fill="#000"/>
<rect x="1330" y="967" width="140" height="66" fill="#000"/>
<rect x="1330" y="1367" width="140" height="66" fill="#000"/>
<rect x="1730" y="167" width="140" height="66" fill="#000"/>
<rect x="1730" y="567" width="140" height="66" fill="#000"/>
<rect x="1730" y="967" width="140" height="66" fill="#000"/>
<rect x="1730" y="1367" width="140" height="66" fill="#000"/>
<rect x="2130" y="167" width="140" height="66" fill="#000"/>
<rect x="2130" y="567" width="140" height="66" fill="#000"/>
<rect x="2130" y="967" width="140" height="66" fill="#000"/>
<rect x="2130" y="1367" width="140" height="66" fill="#000"/>
<rect x="2530" y="167" width="140" height="66" fill="#000"/>
<rect x="2530" y="567" width="140" height="66" fill="#000"/>
<rect x="2530" y="967" width="140" height="66" fill="#000"/>
<rect x="2530" y="1367" width="140" height="66" fill="#000"/>
</mask></defs>
<path d="M-2000 0L-336 1664M-1600 0L64 1664M-1200 0L464 1664M-800 0L864 1664M-400 0L1264 1664M0 0L1664 1664M400 0L2064 1664M800 0L2464 1664M1200 0L2864 1664M1600 0L3264 1664M2000 0L3664 1664M2400 0L4064 1664M2800 0L4464 1664M3200 0L4864 1664M0 0L-1664 1664M400 0L-1264 1664M800 0L-864 1664M1200 0L-464 1664M1600 0L-64 1664M2000 0L336 1664M2400 0L736 1664M2800 0L1136 1664M3200 0L1536 1664M3600 0L1936 1664M4000 0L2336 1664M4400 0L2736 1664" stroke="rgba(0,0,0,0.12)" stroke-width="1.5" stroke-dasharray="7 9.5" fill="none" mask="url(#wmMask)"/>
</svg>
<div class="a" style="left:140px;top:171px;width:120px;text-align:center;font-size:33px;line-height:33px;color:rgba(60,60,60,0.24);white-space:nowrap;font-weight:400">藏宝库</div>
<div class="a" style="left:120px;top:201px;width:160px;text-align:center;font-size:30px;line-height:30px;color:rgba(60,60,60,0.24);white-space:nowrap;letter-spacing:-1.8px;font-weight:400">28xin.com</div>
<div class="a" style="left:140px;top:571px;width:120px;text-align:center;font-size:33px;line-height:33px;color:rgba(60,60,60,0.24);white-space:nowrap;font-weight:400">藏宝库</div>
<div class="a" style="left:120px;top:601px;width:160px;text-align:center;font-size:30px;line-height:30px;color:rgba(60,60,60,0.24);white-space:nowrap;letter-spacing:-1.8px;font-weight:400">28xin.com</div>
<div class="a" style="left:140px;top:971px;width:120px;text-align:center;font-size:33px;line-height:33px;color:rgba(60,60,60,0.24);white-space:nowrap;font-weight:400">藏宝库</div>
<div class="a" style="left:120px;top:1001px;width:160px;text-align:center;font-size:30px;line-height:30px;color:rgba(60,60,60,0.24);white-space:nowrap;letter-spacing:-1.8px;font-weight:400">28xin.com</div>
<div class="a" style="left:140px;top:1371px;width:120px;text-align:center;font-size:33px;line-height:33px;color:rgba(60,60,60,0.24);white-space:nowrap;font-weight:400">藏宝库</div>
<div class="a" style="left:120px;top:1401px;width:160px;text-align:center;font-size:30px;line-height:30px;color:rgba(60,60,60,0.24);white-space:nowrap;letter-spacing:-1.8px;font-weight:400">28xin.com</div>
<div class="a" style="left:540px;top:171px;width:120px;text-align:center;font-size:33px;line-height:33px;color:rgba(60,60,60,0.24);white-space:nowrap;font-weight:400">藏宝库</div>
<div class="a" style="left:520px;top:201px;width:160px;text-align:center;font-size:30px;line-height:30px;color:rgba(60,60,60,0.24);white-space:nowrap;letter-spacing:-1.8px;font-weight:400">28xin.com</div>
<div class="a" style="left:540px;top:571px;width:120px;text-align:center;font-size:33px;line-height:33px;color:rgba(60,60,60,0.24);white-space:nowrap;font-weight:400">藏宝库</div>
<div class="a" style="left:520px;top:601px;width:160px;text-align:center;font-size:30px;line-height:30px;color:rgba(60,60,60,0.24);white-space:nowrap;letter-spacing:-1.8px;font-weight:400">28xin.com</div>
<div class="a" style="left:540px;top:971px;width:120px;text-align:center;font-size:33px;line-height:33px;color:rgba(60,60,60,0.24);white-space:nowrap;font-weight:400">藏宝库</div>
<div class="a" style="left:520px;top:1001px;width:160px;text-align:center;font-size:30px;line-height:30px;color:rgba(60,60,60,0.24);white-space:nowrap;letter-spacing:-1.8px;font-weight:400">28xin.com</div>
<div class="a" style="left:540px;top:1371px;width:120px;text-align:center;font-size:33px;line-height:33px;color:rgba(60,60,60,0.24);white-space:nowrap;font-weight:400">藏宝库</div>
<div class="a" style="left:520px;top:1401px;width:160px;text-align:center;font-size:30px;line-height:30px;color:rgba(60,60,60,0.24);white-space:nowrap;letter-spacing:-1.8px;font-weight:400">28xin.com</div>
<div class="a" style="left:940px;top:171px;width:120px;text-align:center;font-size:33px;line-height:33px;color:rgba(60,60,60,0.24);white-space:nowrap;font-weight:400">藏宝库</div>
<div class="a" style="left:920px;top:201px;width:160px;text-align:center;font-size:30px;line-height:30px;color:rgba(60,60,60,0.24);white-space:nowrap;letter-spacing:-1.8px;font-weight:400">28xin.com</div>
<div class="a" style="left:940px;top:571px;width:120px;text-align:center;font-size:33px;line-height:33px;color:rgba(60,60,60,0.24);white-space:nowrap;font-weight:400">藏宝库</div>
<div class="a" style="left:920px;top:601px;width:160px;text-align:center;font-size:30px;line-height:30px;color:rgba(60,60,60,0.24);white-space:nowrap;letter-spacing:-1.8px;font-weight:400">28xin.com</div>
<div class="a" style="left:940px;top:971px;width:120px;text-align:center;font-size:33px;line-height:33px;color:rgba(60,60,60,0.24);white-space:nowrap;font-weight:400">藏宝库</div>
<div class="a" style="left:920px;top:1001px;width:160px;text-align:center;font-size:30px;line-height:30px;color:rgba(60,60,60,0.24);white-space:nowrap;letter-spacing:-1.8px;font-weight:400">28xin.com</div>
<div class="a" style="left:940px;top:1371px;width:120px;text-align:center;font-size:33px;line-height:33px;color:rgba(60,60,60,0.24);white-space:nowrap;font-weight:400">藏宝库</div>
<div class="a" style="left:920px;top:1401px;width:160px;text-align:center;font-size:30px;line-height:30px;color:rgba(60,60,60,0.24);white-space:nowrap;letter-spacing:-1.8px;font-weight:400">28xin.com</div>
<div class="a" style="left:1340px;top:171px;width:120px;text-align:center;font-size:33px;line-height:33px;color:rgba(60,60,60,0.24);white-space:nowrap;font-weight:400">藏宝库</div>
<div class="a" style="left:1320px;top:201px;width:160px;text-align:center;font-size:30px;line-height:30px;color:rgba(60,60,60,0.24);white-space:nowrap;letter-spacing:-1.8px;font-weight:400">28xin.com</div>
<div class="a" style="left:1340px;top:571px;width:120px;text-align:center;font-size:33px;line-height:33px;color:rgba(60,60,60,0.24);white-space:nowrap;font-weight:400">藏宝库</div>
<div class="a" style="left:1320px;top:601px;width:160px;text-align:center;font-size:30px;line-height:30px;color:rgba(60,60,60,0.24);white-space:nowrap;letter-spacing:-1.8px;font-weight:400">28xin.com</div>
<div class="a" style="left:1340px;top:971px;width:120px;text-align:center;font-size:33px;line-height:33px;color:rgba(60,60,60,0.24);white-space:nowrap;font-weight:400">藏宝库</div>
<div class="a" style="left:1320px;top:1001px;width:160px;text-align:center;font-size:30px;line-height:30px;color:rgba(60,60,60,0.24);white-space:nowrap;letter-spacing:-1.8px;font-weight:400">28xin.com</div>
<div class="a" style="left:1340px;top:1371px;width:120px;text-align:center;font-size:33px;line-height:33px;color:rgba(60,60,60,0.24);white-space:nowrap;font-weight:400">藏宝库</div>
<div class="a" style="left:1320px;top:1401px;width:160px;text-align:center;font-size:30px;line-height:30px;color:rgba(60,60,60,0.24);white-space:nowrap;letter-spacing:-1.8px;font-weight:400">28xin.com</div>
<div class="a" style="left:1740px;top:171px;width:120px;text-align:center;font-size:33px;line-height:33px;color:rgba(60,60,60,0.24);white-space:nowrap;font-weight:400">藏宝库</div>
<div class="a" style="left:1720px;top:201px;width:160px;text-align:center;font-size:30px;line-height:30px;color:rgba(60,60,60,0.24);white-space:nowrap;letter-spacing:-1.8px;font-weight:400">28xin.com</div>
<div class="a" style="left:1740px;top:571px;width:120px;text-align:center;font-size:33px;line-height:33px;color:rgba(60,60,60,0.24);white-space:nowrap;font-weight:400">藏宝库</div>
<div class="a" style="left:1720px;top:601px;width:160px;text-align:center;font-size:30px;line-height:30px;color:rgba(60,60,60,0.24);white-space:nowrap;letter-spacing:-1.8px;font-weight:400">28xin.com</div>
<div class="a" style="left:1740px;top:971px;width:120px;text-align:center;font-size:33px;line-height:33px;color:rgba(60,60,60,0.24);white-space:nowrap;font-weight:400">藏宝库</div>
<div class="a" style="left:1720px;top:1001px;width:160px;text-align:center;font-size:30px;line-height:30px;color:rgba(60,60,60,0.24);white-space:nowrap;letter-spacing:-1.8px;font-weight:400">28xin.com</div>
<div class="a" style="left:1740px;top:1371px;width:120px;text-align:center;font-size:33px;line-height:33px;color:rgba(60,60,60,0.24);white-space:nowrap;font-weight:400">藏宝库</div>
<div class="a" style="left:1720px;top:1401px;width:160px;text-align:center;font-size:30px;line-height:30px;color:rgba(60,60,60,0.24);white-space:nowrap;letter-spacing:-1.8px;font-weight:400">28xin.com</div>
<div class="a" style="left:2140px;top:171px;width:120px;text-align:center;font-size:33px;line-height:33px;color:rgba(60,60,60,0.24);white-space:nowrap;font-weight:400">藏宝库</div>
<div class="a" style="left:2120px;top:201px;width:160px;text-align:center;font-size:30px;line-height:30px;color:rgba(60,60,60,0.24);white-space:nowrap;letter-spacing:-1.8px;font-weight:400">28xin.com</div>
<div class="a" style="left:2140px;top:571px;width:120px;text-align:center;font-size:33px;line-height:33px;color:rgba(60,60,60,0.24);white-space:nowrap;font-weight:400">藏宝库</div>
<div class="a" style="left:2120px;top:601px;width:160px;text-align:center;font-size:30px;line-height:30px;color:rgba(60,60,60,0.24);white-space:nowrap;letter-spacing:-1.8px;font-weight:400">28xin.com</div>
<div class="a" style="left:2140px;top:971px;width:120px;text-align:center;font-size:33px;line-height:33px;color:rgba(60,60,60,0.24);white-space:nowrap;font-weight:400">藏宝库</div>
<div class="a" style="left:2120px;top:1001px;width:160px;text-align:center;font-size:30px;line-height:30px;color:rgba(60,60,60,0.24);white-space:nowrap;letter-spacing:-1.8px;font-weight:400">28xin.com</div>
<div class="a" style="left:2140px;top:1371px;width:120px;text-align:center;font-size:33px;line-height:33px;color:rgba(60,60,60,0.24);white-space:nowrap;font-weight:400">藏宝库</div>
<div class="a" style="left:2120px;top:1401px;width:160px;text-align:center;font-size:30px;line-height:30px;color:rgba(60,60,60,0.24);white-space:nowrap;letter-spacing:-1.8px;font-weight:400">28xin.com</div>
<div class="a" style="left:2540px;top:171px;width:120px;text-align:center;font-size:33px;line-height:33px;color:rgba(60,60,60,0.24);white-space:nowrap;font-weight:400">藏宝库</div>
<div class="a" style="left:2520px;top:201px;width:160px;text-align:center;font-size:30px;line-height:30px;color:rgba(60,60,60,0.24);white-space:nowrap;letter-spacing:-1.8px;font-weight:400">28xin.com</div>
<div class="a" style="left:2540px;top:571px;width:120px;text-align:center;font-size:33px;line-height:33px;color:rgba(60,60,60,0.24);white-space:nowrap;font-weight:400">藏宝库</div>
<div class="a" style="left:2520px;top:601px;width:160px;text-align:center;font-size:30px;line-height:30px;color:rgba(60,60,60,0.24);white-space:nowrap;letter-spacing:-1.8px;font-weight:400">28xin.com</div>
<div class="a" style="left:2540px;top:971px;width:120px;text-align:center;font-size:33px;line-height:33px;color:rgba(60,60,60,0.24);white-space:nowrap;font-weight:400">藏宝库</div>
<div class="a" style="left:2520px;top:1001px;width:160px;text-align:center;font-size:30px;line-height:30px;color:rgba(60,60,60,0.24);white-space:nowrap;letter-spacing:-1.8px;font-weight:400">28xin.com</div>
<div class="a" style="left:2540px;top:1371px;width:120px;text-align:center;font-size:33px;line-height:33px;color:rgba(60,60,60,0.24);white-space:nowrap;font-weight:400">藏宝库</div>
<div class="a" style="left:2520px;top:1401px;width:160px;text-align:center;font-size:30px;line-height:30px;color:rgba(60,60,60,0.24);white-space:nowrap;letter-spacing:-1.8px;font-weight:400">28xin.com</div>
</body></html>
